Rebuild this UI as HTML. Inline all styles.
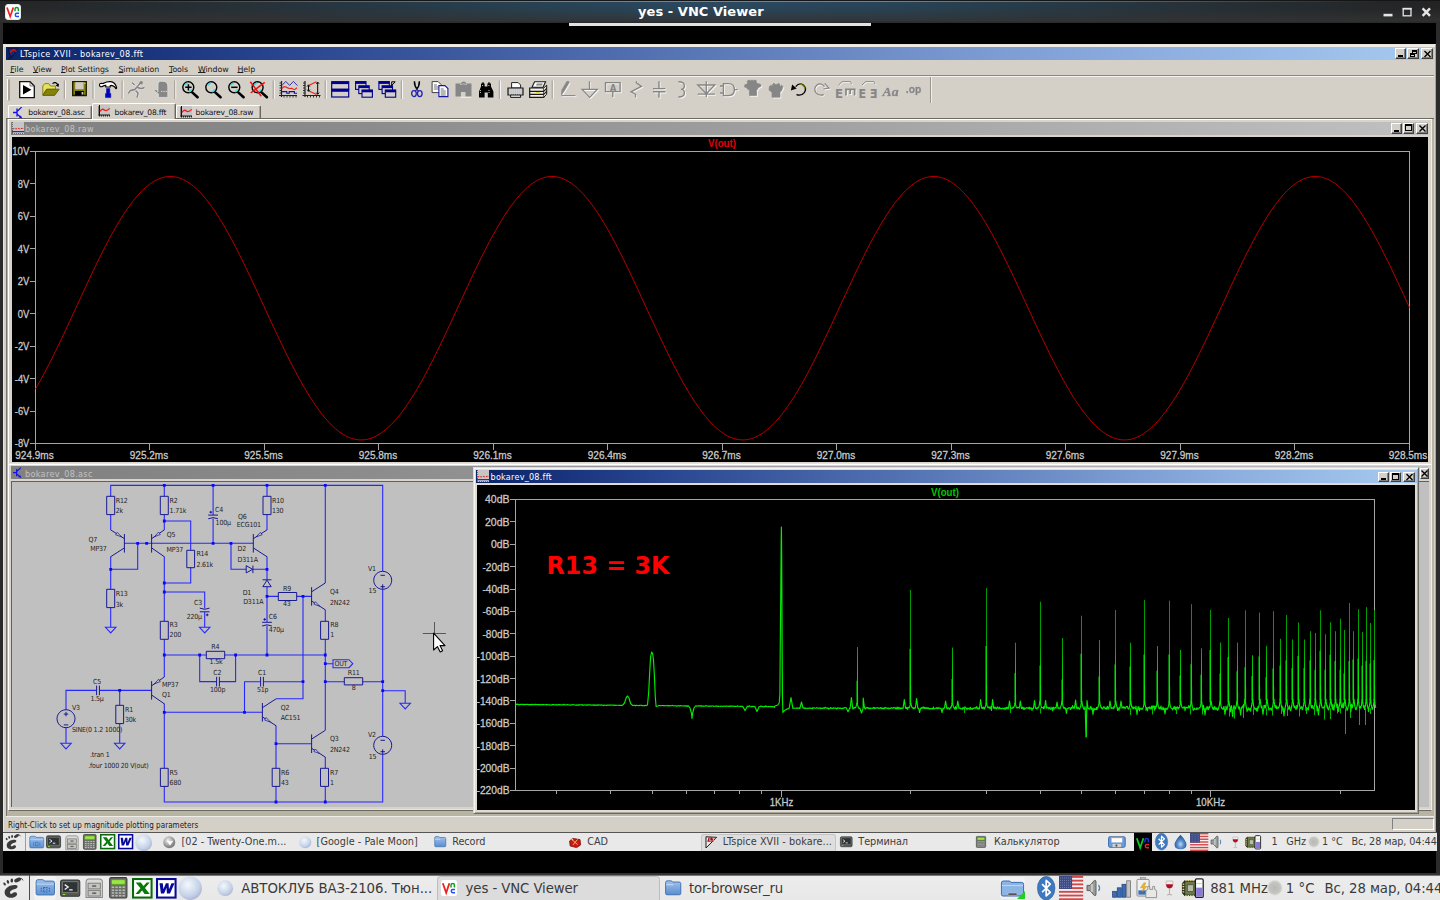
<!DOCTYPE html>
<html lang="en"><head><meta charset="utf-8"><title>yes - VNC Viewer</title>
<style>
*{box-sizing:border-box;margin:0;padding:0}
html,body{width:1440px;height:900px;overflow:hidden;background:#000}
body{position:relative;font-family:"DejaVu Sans","Liberation Sans",sans-serif;font-size:8px;color:#000}
.a{position:absolute}
.t{position:absolute;white-space:pre;line-height:1}
svg{position:absolute;overflow:visible}
.w{font-family:"DejaVu Sans",sans-serif;font-size:8px}
.ax{font-family:"Liberation Sans",sans-serif;font-size:10.5px;color:#c8c8c8;fill:#cacaca;stroke:#cacaca;stroke-width:.28px}
.sc{font-family:"DejaVu Sans Condensed","DejaVu Sans",sans-serif;font-size:7px;fill:#242424;letter-spacing:-.2px}
u{text-decoration:underline;text-underline-offset:.2px;text-decoration-thickness:.9px}
.btn{position:absolute;background:#d4d0c8;border:1px solid;border-color:#fff #404040 #404040 #fff;box-shadow:inset -1px -1px 0 #808080}

</style></head>
<body>
<!-- vnc.html -->
<div class="a" style="left:0;top:0;width:1440px;height:23px;background:linear-gradient(90deg,#242526 0%,#26323a 18%,#284559 40%,#2a4a62 50%,#284559 62%,#26323a 82%,#232323 100%)"></div>
<div class="a" style="left:0;top:0;width:1440px;height:23px;background:linear-gradient(180deg,rgba(20,20,20,.95) 0,rgba(20,20,20,.95) 1px,rgba(40,40,40,0) 1px,rgba(40,40,40,0) 2px,rgba(45,45,45,.15) 40%,rgba(50,50,50,.85) 90%,rgba(40,40,40,.95) 100%)"></div>
<div class="a" style="left:0;top:1px;width:1440px;height:1px;background:linear-gradient(90deg,rgba(150,175,195,0) 4%,rgba(150,175,195,.35) 20%,rgba(150,175,195,.6) 40%,rgba(150,175,195,.6) 60%,rgba(150,175,195,.35) 80%,rgba(150,175,195,0) 96%)"></div>
<div class="a" style="left:0;top:23px;width:3px;height:850px;background:#2a2a2a"></div>
<div class="a" style="left:1436px;top:23px;width:4px;height:850px;background:#2b2b2b"></div>
<svg style="left:5px;top:4px" width="16" height="16" viewBox="0 0 16 16"><rect x="0.5" y="0.5" width="15" height="15" rx="2.5" fill="#fff" stroke="#e8e8e8"/><path d="M2 3.5 L5.2 12.5 L8.3 3.5" fill="none" stroke="#f02020" stroke-width="1.7"/><path d="M10 7.2V5.2Q10 3.6 11.7 3.6Q13.4 3.6 13.4 5.2V7.2" fill="none" stroke="#10a020" stroke-width="1.5"/><path d="M14 9.3H11.8Q10.3 9.3 10.3 10.9Q10.3 12.6 11.8 12.6H14" fill="none" stroke="#2050f0" stroke-width="1.5"/></svg>
<div class="t" style="left:638px;top:4px;font:bold 13px 'DejaVu Sans',sans-serif;color:#fff;letter-spacing:.05px">yes - VNC Viewer</div>
<div class="a" style="left:569px;top:23px;width:302px;height:3px;background:#e2e2e2"></div>
<svg style="left:1380px;top:4px" width="56" height="16" viewBox="1380 4 56 16"><rect x="1383.5" y="13.8" width="9" height="2.6" fill="#e6e6e6"/><rect x="1403.2" y="8.8" width="7.8" height="7" fill="none" stroke="#e6e6e6" stroke-width="1.3"/><rect x="1402.6" y="7.8" width="9" height="1.6" fill="#e6e6e6"/><path d="M1422.6 8.4L1430 15.8M1430 8.4L1422.6 15.8" stroke="#e6e6e6" stroke-width="2.4" fill="none"/></svg>

<!-- ltframe.html -->
<div class="a" style="left:3px;top:44px;width:1433px;height:789px;background:#d4d0c8;border:1px solid;border-color:#e8e4dc #a8a49c #808080 #e8e4dc"></div>
<div class="a" style="left:4px;top:45px;width:1431px;height:2px;background:#eeebe4"></div>
<div class="a" style="left:6px;top:47px;width:1428px;height:13px;background:linear-gradient(90deg,#0a246a 0%,#2a4690 20%,#5b7ab8 50%,#86a6da 75%,#a6caf0 100%)"></div>
<svg style="left:7px;top:47px" width="12" height="13" viewBox="0 0 12 13"><path d="M1 1.5L11 1L4 11.5Z" fill="#1a2a7a" stroke="#0c1440" stroke-width="1"/><path d="M3 5.5L6.5 2.5L9.5 4.5" stroke="#e01010" stroke-width="1.3" fill="none"/><path d="M1 12L6 8" stroke="#101030" stroke-width="1"/></svg>
<div class="t w" style="left:20px;top:50.4px;color:#fff;letter-spacing:.37px;font-size:8.1px">LTspice XVII - bokarev_08.fft</div>
<div class="btn" style="left:1395px;top:48px;width:11px;height:11px"><i class="a" style="left:2px;top:6px;width:5px;height:2px;background:#000"></i></div>
<div class="btn" style="left:1407px;top:48px;width:12px;height:11px"><i class="a" style="left:4px;top:1px;width:5px;height:4px;border:1px solid #000;border-top-width:2px"></i><i class="a" style="left:2px;top:4px;width:5px;height:4px;border:1px solid #000;border-top-width:2px;background:#d4d0c8"></i></div>
<div class="btn" style="left:1421px;top:48px;width:12px;height:11px"><svg style="left:2px;top:2px" width="7" height="6" viewBox="0 0 7 6"><path d="M0.5 0L6.5 6M6.5 0L0.5 6" stroke="#000" stroke-width="1.4"/></svg></div>
<!-- menu -->
<div class="t w" style="left:10.3px;top:66px;font-size:7.9px;letter-spacing:.02px;color:#202020"><u>F</u>ile</div>
<div class="t w" style="left:33px;top:66px;font-size:7.9px;letter-spacing:.02px;color:#202020"><u>V</u>iew</div>
<div class="t w" style="left:61px;top:66px;font-size:7.9px;letter-spacing:-.15px;color:#202020"><u>P</u>lot Settings</div>
<div class="t w" style="left:118.5px;top:66px;font-size:7.9px;letter-spacing:-.15px;color:#202020"><u>S</u>imulation</div>
<div class="t w" style="left:169px;top:66px;font-size:7.9px;letter-spacing:-.1px;color:#202020"><u>T</u>ools</div>
<div class="t w" style="left:198px;top:66px;font-size:7.9px;letter-spacing:-.1px;color:#202020"><u>W</u>indow</div>
<div class="t w" style="left:237.5px;top:66px;font-size:7.9px;letter-spacing:-.1px;color:#202020"><u>H</u>elp</div>
<div class="a" style="left:6px;top:75px;width:1428px;height:1px;background:#8c8880"></div>
<div class="a" style="left:6px;top:76px;width:1428px;height:1px;background:#f4f2ee"></div>
<!-- MDI client -->
<div class="a" style="left:6px;top:117.5px;width:1428px;height:698.5px;background:#b8b4a4;border-top:1.5px solid #6c6a64;border-left:1.5px solid #77746c"></div>

<!-- toolbar.html -->
<svg style="left:0;top:0" width="1440" height="900" viewBox="0 0 1440 900">
<path d="M7.5 79v21" stroke="#fff" stroke-width="1"/><path d="M9 79.5v21" stroke="#8a867e" stroke-width="1.2"/>
<path d="M65.3 80.5v18.5" stroke="#fff" stroke-width="1"/><path d="M64.3 80.5v18.5" stroke="#a09c94" stroke-width="1"/>
<path d="M94.0 80.5v18.5" stroke="#fff" stroke-width="1"/><path d="M93.0 80.5v18.5" stroke="#a09c94" stroke-width="1"/>
<path d="M123.1 80.5v18.5" stroke="#fff" stroke-width="1"/><path d="M122.1 80.5v18.5" stroke="#a09c94" stroke-width="1"/>
<path d="M175.7 80.5v18.5" stroke="#fff" stroke-width="1"/><path d="M174.7 80.5v18.5" stroke="#a09c94" stroke-width="1"/>
<path d="M274.2 80.5v18.5" stroke="#fff" stroke-width="1"/><path d="M273.2 80.5v18.5" stroke="#a09c94" stroke-width="1"/>
<path d="M326.2 80.5v18.5" stroke="#fff" stroke-width="1"/><path d="M325.2 80.5v18.5" stroke="#a09c94" stroke-width="1"/>
<path d="M402.3 80.5v18.5" stroke="#fff" stroke-width="1"/><path d="M401.3 80.5v18.5" stroke="#a09c94" stroke-width="1"/>
<path d="M500.3 80.5v18.5" stroke="#fff" stroke-width="1"/><path d="M499.3 80.5v18.5" stroke="#a09c94" stroke-width="1"/>
<path d="M553.2 80.5v18.5" stroke="#fff" stroke-width="1"/><path d="M552.2 80.5v18.5" stroke="#a09c94" stroke-width="1"/>
<path d="M930.5 77v26" stroke="#9a968e" stroke-width="1"/><path d="M931.5 77v26" stroke="#f0eee8" stroke-width="1"/>
<g transform="translate(19,81)"><path d="M0.7 0.7h10.3l4.3 4.3v11.6h-14.6z" fill="#fff" stroke="#111" stroke-width="1.3"/><path d="M11 0.7v4.3h4.3" fill="none" stroke="#555" stroke-width=".8"/><path d="M4 4l8.4 4.7L4 13.6z" fill="#000"/></g>
<g transform="translate(42,81)"><path d="M10.5 2.6q3.2-2.6 5.6 1.6" fill="none" stroke="#000" stroke-width="1.2"/><path d="M17 2.4l-.4 3.6l-3-1.6z" fill="#000"/><path d="M0.8 5l2-2.4h4l1.6 2.4h5v3.4h-9l-3.6 5.4z" fill="#e6e25c" stroke="#7c7a14" stroke-width=".9"/><path d="M0.8 14.4l4-6.2h12.4l-4.6 6.2z" fill="#84820a" stroke="#5e5c06" stroke-width=".9"/></g>
<g transform="translate(72,81)"><path d="M0.7 0.7h13.6v13.8h-13.6z" fill="#84820a" stroke="#1c1c00" stroke-width="1.3"/><rect x="3.2" y="1.2" width="8.4" height="7" fill="#d0ccc4"/><rect x="3" y="10" width="9" height="4.3" fill="#000"/><rect x="9.6" y="11" width="1.8" height="2.6" fill="#d0ccc4"/><rect x="12.2" y="1.6" width="1.2" height="1.4" fill="#d0ccc4"/></g>
<g transform="translate(98.5,81)"><path d="M1 4q0-2 2.2-1.6q1.6.3 2.4-.4q2.6-1.6 6.4-1.4q4.600 .6 6 5.600q.4 1.600-.5 1.600q-1.400-3-4.600-3.400l-1.200 .2v1.400h-4.400v-1.600q-2 0-3 .800q-1 .8-2.300 .4q-1-.2-1-1.600z" fill="#fff" stroke="#000" stroke-width="1.1"/><path d="M8 7.600h3.300v5h1v4h-5.300v-4h1z" fill="#0000c8" stroke="#000090" stroke-width=".5"/></g>
<g transform="translate(128,81)"><g stroke="#fff" stroke-width="2.6" fill="none" opacity=".9"><path d="M4 1.600l2.600 2.400M12.500 1.400l-2.600 3.600l-3 3.400l-4.600 1.200l-2 3M9.600 6.600l4 1l3-1.200M7.600 9.600l2.400 2.400l-1 4.600"/></g><g stroke="#868686" stroke-width="1.7" fill="none"><path d="M4 1.600l2.600 2.400M12.500 1.400l-2.600 3.600l-3 3.400l-4.600 1.200l-2 3M9.600 6.600l4 1l3-1.200M7.600 9.600l2.400 2.400l-1 4.600"/></g><circle cx="13.200" cy="1.800" r="1.700" fill="#868686"/></g>
<g transform="translate(153,81)"><path d="M5.400 16.400v-3.600l-3.400-2.200q-1.600-1.600 0-2.400l3 1.200v-6.400q0-2.600 2.800-2.800q4.600-.4 6 1.600q1 1.400 1 4v10.600z" fill="#868686" stroke="#e8e6e0" stroke-width=".7"/><path d="M4 10.400h1.600M8 10.400h1.400M10.400 10.400h1.400M12.600 10.400h1.400" stroke="#d8d6d0" stroke-width="1"/></g>
<g transform="translate(182,81)"><path d="M9.400 10.600l6.200 5.600" stroke="#000" stroke-width="2.600" stroke-linecap="round"/><circle cx="6.300" cy="6.300" r="5.500" fill="#d4d0c8" stroke="#000" stroke-width="1.400"/><path d="M2.800 4.400q1-2 3-2.400M9.800 8.400q-1 2-3 2.400" stroke="#30e0e8" stroke-width="1.600" fill="none"/><path d="M3.200 6.300h6.400M6.400 3.200v6.400" stroke="#000" stroke-width="1.500"/></g>
<g transform="translate(205,81)"><path d="M9.400 10.600l6.200 5.600" stroke="#000" stroke-width="2.600" stroke-linecap="round"/><circle cx="6.300" cy="6.300" r="5.500" fill="#d4d0c8" stroke="#000" stroke-width="1.400"/><path d="M2.800 4.400q1-2 3-2.400M9.800 8.400q-1 2-3 2.400" stroke="#30e0e8" stroke-width="1.600" fill="none"/></g>
<g transform="translate(228,81)"><path d="M9.400 10.600l6.200 5.600" stroke="#000" stroke-width="2.600" stroke-linecap="round"/><circle cx="6.300" cy="6.300" r="5.500" fill="#d4d0c8" stroke="#000" stroke-width="1.400"/><path d="M2.800 4.400q1-2 3-2.400M9.800 8.400q-1 2-3 2.400" stroke="#30e0e8" stroke-width="1.600" fill="none"/><path d="M3.200 6.300h6.400" stroke="#000" stroke-width="1.500"/></g>
<g transform="translate(251.3,81)"><path d="M9.400 10.600l6.200 5.600" stroke="#000" stroke-width="2.600" stroke-linecap="round"/><circle cx="6.300" cy="6.300" r="5.500" fill="#d4d0c8" stroke="#000" stroke-width="1.400"/><path d="M2.800 4.400q1-2 3-2.400M9.800 8.400q-1 2-3 2.400" stroke="#30e0e8" stroke-width="1.600" fill="none"/><path d="M-1 .8l11 14.400M13.400 1.400l-14 10.600" stroke="#f01010" stroke-width="1.500"/></g>
<g transform="translate(279,81)"><path d="M2.500 0v16M0 14.500h18" stroke="#202020" stroke-width="1.200"/><path d="M0.500 2h2M.5 4.500h2M.5 7h2M.5 9.500h2M.5 12h2M5 14.500v2M8 14.500v2M11 14.500v2M14 14.500v2M17 14.500v2" stroke="#202020" stroke-width=".9"/><path d="M2.800 4.600l4-4.200l3.800 4l3.800-4l4 4.200" fill="none" stroke="#3030b0" stroke-width="1"/><path d="M2.800 7.600q2.200-3 4.600-1.400q2.600 1.800 5.200 1q2 1.800 3.400 1l2-1.400" fill="none" stroke="#f02020" stroke-width="1.100"/><path d="M2.800 10.600h5v1.600h2.400v-1.600h5.200v1.600h2.600" fill="none" stroke="#1010a0" stroke-width="1.100"/></g>
<g transform="translate(302.5,81)"><path d="M2.500 0v16M0 14.500h18" stroke="#202020" stroke-width="1.200"/><path d="M0.500 2h2M.5 4.500h2M.5 7h2M.5 9.500h2M.5 12h2M5 14.500v2M8 14.500v2M11 14.500v2M14 14.500v2M17 14.500v2" stroke="#202020" stroke-width=".9"/><path d="M14 .8l-7.400 3.400M6.600 10l7.400 3.400" fill="none" stroke="#f02020" stroke-width="1.100"/><path d="M6 4.400v5.400M15.200 1.400v11.600" stroke="#000" stroke-width="1"/><path d="M4.600 5.600l1.400-1.800l1.400 1.800M4.600 8.600l1.400 1.800l1.400-1.800M13.800 2.800l1.400-1.800l1.400 1.800M13.800 11.600l1.400 1.800l1.400-1.800" fill="none" stroke="#000" stroke-width=".9"/></g>
<g transform="translate(331,81)"><rect x=".7" y=".7" width="17" height="7.600" fill="#d4d0c8" stroke="#000090" stroke-width="1.200"/><rect x=".7" y=".7" width="17" height="2.400" fill="#000090"/><rect x=".7" y="8.400" width="17" height="7.600" fill="#d4d0c8" stroke="#000090" stroke-width="1.200"/><rect x=".7" y="8.400" width="17" height="2.400" fill="#000090"/></g>
<g transform="translate(355,81)"><rect x=".6" y=".6" width="10.400" height="7.800" fill="#d4d0c8" stroke="#000090" stroke-width="1.100"/><rect x=".6" y=".6" width="10.400" height="2.300" fill="#000090"/><rect x="3.800" y="4.800" width="10.400" height="7.800" fill="#d4d0c8" stroke="#000090" stroke-width="1.100"/><rect x="3.800" y="4.800" width="10.400" height="2.300" fill="#000090"/><rect x="7" y="9" width="10.400" height="7.200" fill="#d4d0c8" stroke="#000090" stroke-width="1.100"/><rect x="7" y="9" width="10.400" height="2.300" fill="#000090"/></g>
<g transform="translate(378.3,81)"><rect x=".6" y=".6" width="10.400" height="7.800" fill="#d4d0c8" stroke="#000090" stroke-width="1.100"/><rect x=".6" y=".6" width="10.400" height="2.300" fill="#000090"/><rect x="3.800" y="4.800" width="10.400" height="7.800" fill="#d4d0c8" stroke="#000090" stroke-width="1.100"/><rect x="3.800" y="4.800" width="10.400" height="2.300" fill="#000090"/><rect x="7" y="9" width="10.400" height="7.200" fill="#d4d0c8" stroke="#000090" stroke-width="1.100"/><rect x="7" y="9" width="10.400" height="2.300" fill="#000090"/><path d="M13.400 .8h3.600v3.600M13.600 .9l3.600 3.800" transform="translate(30.400,0) scale(-1,1)" fill="none" stroke="#000" stroke-width="1"/></g>
<g transform="translate(411,81)"><path d="M3.400 .2q0 5 3 8.400M8.400 .2q0 5-3 8.400" fill="none" stroke="#000" stroke-width="1.500"/><ellipse cx="3" cy="12.600" rx="2.300" ry="3" fill="none" stroke="#2020b0" stroke-width="1.300"/><ellipse cx="8.800" cy="12.600" rx="2.300" ry="3" fill="none" stroke="#2020b0" stroke-width="1.300"/><path d="M4.400 10.200l1.500-2l1.500 2" fill="none" stroke="#2020b0" stroke-width="1.200"/></g>
<g transform="translate(431.5,81)"><path d="M.6.6h6l3 3v8h-9z" fill="#fff" stroke="#404040" stroke-width="1"/><path d="M2.400 4h3M2.400 6h5M2.400 8h5" stroke="#606060" stroke-width=".9"/><path d="M7.400 4.600h6l3 3v8h-9z" fill="#fff" stroke="#1818a0" stroke-width="1.100"/><path d="M9.200 8h3M9.200 10h5M9.200 12h5M9.200 14h5" stroke="#606060" stroke-width=".9"/></g>
<g transform="translate(455,81)"><path d="M.5 2.600h5.500q.4-2.200 2.600-2.200t2.600 2.200h5.300v13h-6v-4.600h-4.600v4.600h-5.400z" fill="#868686"/><path d="M5.400 15.800h10.800v.9h-10.800z" fill="#fff" opacity=".8"/><path d="M5 3.600q3.400-1.400 7 0" fill="none" stroke="#c8c8c8" stroke-width=".8"/></g>
<g transform="translate(477,81)"><path d="M4 2.600h3.600v3h2.800v-3h3.600v3l2.400 5v6h-5.600v-5h-3.200v5h-5.600v-6l2-5z" fill="#000"/><path d="M5 1.400h2v1.400h-2zM11 1.400h2v1.400h-2z" fill="#000"/><path d="M3.400 9v4M5.600 4v2M12 9v4M11.800 4v2" stroke="#fff" stroke-width=".8" stroke-dasharray="1 1"/></g>
<g transform="translate(507,82)"><path d="M4.600 .6h6.600l2.400 2.400v3h-9z" fill="#fff" stroke="#202020" stroke-width="1"/><path d="M1 6h15v7h-15z" fill="#c4c4c4" stroke="#181818" stroke-width="1.200"/><path d="M3.600 13h10v2.400h-10z" fill="#e8e8e8" stroke="#181818" stroke-width="1"/><path d="M2.400 8h12M2.400 10h12M2.400 12h12" stroke="#e6e6e6" stroke-width=".8" stroke-dasharray="1.200 1"/></g>
<g transform="translate(529,81)"><path d="M5.600 .7h11l-2.600 5.600h-11z" fill="#fff" stroke="#181818" stroke-width="1.100"/><path d="M7.800 2.600h6l-.8 2h-6z" fill="#888"/><path d="M.7 7h14v9.400h-14z" fill="#f4f0e4" stroke="#181818" stroke-width="1.200"/><path d="M14.700 7l3-2.800v9l-3 3.200" fill="#e8e4d8" stroke="#181818" stroke-width="1"/><path d="M.7 10.400h14M.7 13.400h14M14.700 10.400l3-3M14.700 13.400l3-3" stroke="#181818" stroke-width="1.100" fill="none"/><rect x="7" y="11.200" width="4" height="1.400" fill="#e0d820"/></g>
<g transform="translate(560,81)"><path d="M1.400 14l.4-5l5-8.400q1.600-.8 2.600.6l-5 8.600z" fill="#fff" stroke="#fff" stroke-width="0.6" transform="translate(.9,.9)" opacity=".85"/><path d="M1.400 14l.4-5l5-8.400q1.600-.8 2.600.6l-5 8.600z" fill="#868686" stroke="#868686" stroke-width="0.6"/></g>
<g transform="translate(560,81)"><path d="M1.400 14.600h14" fill="none" stroke="#fff" stroke-width="1.1" transform="translate(.9,.9)" opacity=".85"/><path d="M1.400 14.600h14" fill="none" stroke="#868686" stroke-width="1.1"/></g>
<g transform="translate(581.5,81)"><path d="M8 .2v8M.6 8.400h15.200l-7.600 8z" fill="none" stroke="#fff" stroke-width="1.3" transform="translate(.9,.9)" opacity=".85"/><path d="M8 .2v8M.6 8.400h15.200l-7.600 8z" fill="none" stroke="#868686" stroke-width="1.3"/></g>
<g transform="translate(604,81)"><path d="M1.500 1.600h14.600v9h-14.600zM8.800 10.600v5.600" fill="none" stroke="#fff" stroke-width="1.4" transform="translate(.9,.9)" opacity=".85"/><path d="M1.500 1.600h14.600v9h-14.600zM8.800 10.600v5.600" fill="none" stroke="#868686" stroke-width="1.4"/></g>
<text x="610" y="91" style="font:bold 8px 'DejaVu Sans',sans-serif;fill:#868686">A</text>
<g transform="translate(629,81)"><path d="M7.400 .2v1.600l5 3.600l-10.400 5.400l4.600 2.600v3" fill="none" stroke="#fff" stroke-width="1.3" transform="translate(.9,.9)" opacity=".85"/><path d="M7.400 .2v1.600l5 3.600l-10.400 5.400l4.600 2.600v3" fill="none" stroke="#868686" stroke-width="1.3"/></g>
<g transform="translate(653,81)"><path d="M6 .2v7M6 11.200v5.600M0 7.600h12.400M0 10.800h12.400" fill="none" stroke="#fff" stroke-width="1.4" transform="translate(.9,.9)" opacity=".85"/><path d="M6 .2v7M6 11.200v5.600M0 7.600h12.400M0 10.800h12.400" fill="none" stroke="#868686" stroke-width="1.4"/></g>
<g transform="translate(677,81)"><path d="M1.400 .8q6 0 6 4q0 3.400-3.400 3.600q3.400 .2 3.400 3.600q0 4-6 4" fill="none" stroke="#fff" stroke-width="1.4" transform="translate(.9,.9)" opacity=".85"/><path d="M1.400 .8q6 0 6 4q0 3.400-3.400 3.600q3.400 .2 3.400 3.600q0 4-6 4" fill="none" stroke="#868686" stroke-width="1.4"/></g>
<g transform="translate(697.5,81)"><path d="M8.800 .2v16M.2 4h17.200l-8.600 8.800zM.2 13.200h17.200" fill="none" stroke="#fff" stroke-width="1.3" transform="translate(.9,.9)" opacity=".85"/><path d="M8.800 .2v16M.2 4h17.200l-8.600 8.800zM.2 13.200h17.200" fill="none" stroke="#868686" stroke-width="1.3"/></g>
<g transform="translate(720,81)"><path d="M0 5h3.400M0 12h3.400M3.400 2.600h5q6 0 6 6t-6 6h-5zM14.400 8.600h3.400" fill="none" stroke="#fff" stroke-width="1.4" transform="translate(.9,.9)" opacity=".85"/><path d="M0 5h3.400M0 12h3.400M3.400 2.600h5q6 0 6 6t-6 6h-5zM14.400 8.600h3.400" fill="none" stroke="#868686" stroke-width="1.4"/></g>
<g transform="translate(743.5,81)"><path d="M4 1.600a1.700 1.700 0 1 1 3 0a1.700 1.700 0 1 1 3 0a1.700 1.700 0 1 1 3 0l2.400 1.400a1.600 1.600 0 1 1 0 3q-1.400 2-2.400 3.600v5h-7v-5q-2-1-3.400-3a1.600 1.600 0 1 1 .8-3z" fill="#fff" stroke="#fff" stroke-width="0.7" transform="translate(.9,.9)" opacity=".85"/><path d="M4 1.600a1.700 1.700 0 1 1 3 0a1.700 1.700 0 1 1 3 0a1.700 1.700 0 1 1 3 0l2.400 1.400a1.600 1.600 0 1 1 0 3q-1.400 2-2.400 3.600v5h-7v-5q-2-1-3.400-3a1.600 1.600 0 1 1 .8-3z" fill="#868686" stroke="#868686" stroke-width="0.7"/></g>
<g transform="translate(767,83)"><path d="M2.400 3.600l1.400-1.400l1.600 1.400v-2l1.600-1.400l1.400 1.400h1.600l1.400-1.400l1.600 1.400v2l1.600-1.400l1.400 1.400l-1.400 4l-1.600 2v4.600h-8v-4.600l-3-2.600z" fill="#fff" stroke="#fff" stroke-width="0.7" transform="translate(.9,.9)" opacity=".85"/><path d="M2.400 3.600l1.400-1.400l1.600 1.400v-2l1.600-1.400l1.400 1.400h1.600l1.400-1.400l1.600 1.400v2l1.600-1.400l1.400 1.400l-1.400 4l-1.600 2v4.600h-8v-4.600l-3-2.600z" fill="#868686" stroke="#868686" stroke-width="0.7"/></g>
<g transform="translate(790.5,82)"><path d="M5.200 4.600q3.600-4.400 7.600-1.600q3.800 3.400 1 7.600q-2.800 3.600-7.800 2" fill="none" stroke="#000" stroke-width="1.300"/><path d="M9 1.800q4.600 1 5.400 5.200" fill="none" stroke="#8a8a00" stroke-width="1.100"/><path d="M.4 8.600l1.200-6l4.600 4z" fill="#000"/></g>
<g transform="translate(813.5,82)"><path d="M11 4.600q-3.600-4.400-7.600-1.600q-3.800 3.400-1 7.600q2.800 3.600 7.800 2M11.200 1.400l4.400 4.600l-5.600 1" fill="none" stroke="#fff" stroke-width="1.2" transform="translate(.9,.9)" opacity=".85"/><path d="M11 4.600q-3.600-4.400-7.600-1.600q-3.800 3.400-1 7.600q2.800 3.600 7.800 2M11.200 1.400l4.400 4.600l-5.600 1" fill="none" stroke="#868686" stroke-width="1.2"/></g>
<g transform="translate(835.5,81)"><path d="M3 4l3.600-3.400h8.400l1 2.600" fill="none" stroke="#fff" stroke-width="0.9" transform="translate(.9,.9)" opacity=".85"/><path d="M3 4l3.600-3.400h8.400l1 2.600" fill="none" stroke="#868686" stroke-width="0.9"/></g>
<text x="835" y="98" textLength="8" lengthAdjust="spacingAndGlyphs" style="font:bold 12.500px 'DejaVu Sans',sans-serif;fill:#868686">E</text>
<g transform="translate(845,81)"><path d="M0 8.400h10.600M1 8.400v6M5.200 8.400v4.600M9.600 8.400v6" fill="none" stroke="#fff" stroke-width="1.7" transform="translate(.9,.9)" opacity=".85"/><path d="M0 8.400h10.600M1 8.400v6M5.200 8.400v4.600M9.600 8.400v6" fill="none" stroke="#868686" stroke-width="1.7"/></g>
<g transform="translate(859,81)"><path d="M3 4l3.600-3.400h8.400l1 2.600" fill="none" stroke="#fff" stroke-width="0.9" transform="translate(.9,.9)" opacity=".85"/><path d="M3 4l3.600-3.400h8.400l1 2.600" fill="none" stroke="#868686" stroke-width="0.9"/></g>
<text x="858.600" y="98" textLength="7.600" lengthAdjust="spacingAndGlyphs" style="font:bold 12.500px 'DejaVu Sans',sans-serif;fill:#868686">E</text>
<text x="869.600" y="98" textLength="7.600" lengthAdjust="spacingAndGlyphs" transform="translate(1747,0) scale(-1,1)" style="font:bold 12.500px 'DejaVu Sans',sans-serif;fill:#868686">E</text>
<text x="882.500" y="95.500" textLength="16" lengthAdjust="spacingAndGlyphs" style="font:italic bold 13px 'Liberation Serif',serif;fill:#868686;stroke:#868686;stroke-width:.45px;filter:drop-shadow(.9px .9px 0 #fff)">Aa</text>
<text x="905.800" y="93" textLength="15.500" lengthAdjust="spacingAndGlyphs" style="font:bold 11px 'Liberation Sans',sans-serif;fill:#868686;stroke:#868686;stroke-width:.45px;filter:drop-shadow(.9px .9px 0 #fff)">.op</text>
</svg>
<!-- tabs.html -->
<div class="a" style="left:8px;top:105px;width:84px;height:12.5px;background:#d8d4cc;border:1px solid;border-color:#fff #6a665e transparent #fff;border-bottom:0;border-radius:2px 2px 0 0;box-shadow:inset -1px 0 0 #a8a49c"></div>
<svg style="left:13px;top:106.5px" width="11" height="12" viewBox="0 0 11 12"><path d="M4 1.500v8M0 5.500h4M4 4.500l4.600-4.400M4 7l4 3.400" stroke="#1010f0" stroke-width="1.300" fill="none"/><path d="M9.400 11.600l-3.600-1.200l2-2z" fill="#1010f0"/></svg>
<div class="t w" style="left:28.3px;top:109.2px;font-size:7.6px;letter-spacing:-.19px;color:#101018">bokarev_08.asc</div>
<div class="a" style="left:176px;top:105px;width:85px;height:12.5px;background:#d8d4cc;border:1px solid;border-color:#fff #6a665e transparent #fff;border-bottom:0;border-radius:2px 2px 0 0;box-shadow:inset -1px 0 0 #a8a49c"></div>
<svg style="left:180px;top:106.3px" width="12" height="12" viewBox="0 0 12 12"><rect x="1.500" y="0" width="10.500" height="9.500" fill="#c4c4c4"/><path d="M1.500 0v11.500M0 10h12" stroke="#101010" stroke-width="1"/><path d="M0 2h1.500M0 4h1.500M0 6h1.500M0 8h1.500M3.500 10v1.600M5.500 10v1.600M7.500 10v1.600M9.500 10v1.600M11.500 10v1.600" stroke="#101010" stroke-width=".8"/><path d="M2 6.400q2.200-3.400 4.400-1.400q2 1.600 5.400-1.600" fill="none" stroke="#f01818" stroke-width="1.300"/></svg>
<div class="t w" style="left:195.6px;top:109.2px;font-size:7.6px;letter-spacing:-.19px;color:#101018">bokarev_08.raw</div>
<div class="a" style="left:92px;top:103px;width:84px;height:16.200000000000003px;background:#d4d0c8;border:1px solid;border-color:#fff #6a665e transparent #fff;border-bottom:0;border-radius:2px 2px 0 0;box-shadow:inset -1px 0 0 #a8a49c"></div>
<svg style="left:97.5px;top:105.3px" width="12" height="12" viewBox="0 0 12 12"><rect x="1.500" y="0" width="10.500" height="9.500" fill="#c4c4c4"/><path d="M1.500 0v11.500M0 10h12" stroke="#101010" stroke-width="1"/><path d="M0 2h1.500M0 4h1.500M0 6h1.500M0 8h1.500M3.500 10v1.600M5.500 10v1.600M7.500 10v1.600M9.500 10v1.600M11.500 10v1.600" stroke="#101010" stroke-width=".8"/><path d="M2 6.400q2.200-3.400 4.400-1.400q2 1.600 5.400-1.600" fill="none" stroke="#f01818" stroke-width="1.300"/></svg>
<div class="t w" style="left:114.5px;top:108.6px;font-size:7.6px;letter-spacing:-.19px;color:#101018">bokarev_08.fft</div>
<!-- raw.html -->
<div class="a" style="left:8px;top:119px;width:1424px;height:345px;background:#d8d4cc;border:1px solid;border-color:#fff #f0eee8 #e8e4dc #fff"></div>
<div class="a" style="left:11px;top:122px;width:1417px;height:13px;background:linear-gradient(90deg,#808080 0%,#8c8c8c 25%,#a0a0a0 55%,#b6b6b6 85%,#c0c0c0 100%)"></div>
<svg style="left:12px;top:122px" width="12" height="13" viewBox="0 0 12 13"><rect x="0" y="0" width="12" height="12" fill="#c6c6c6"/><path d="M0.5 7.2L2.5 6.3L4 7L6 6.2L8 7L10 6.3L12 6.6" stroke="#e82020" stroke-width="1" stroke-dasharray="2 1" fill="none"/><path d="M0 9.6H12" stroke="#2030c0" stroke-width="1.2"/><path d="M0.5 0V12M0 11.5H12" stroke="#505050" stroke-width=".8" stroke-dasharray="1 1"/></svg>
<div class="t w" style="left:25px;top:124.8px;color:#c2c2c2;letter-spacing:.33px;font-size:8.1px">bokarev_08.raw</div>
<div class="btn" style="left:1391px;top:123px;width:11px;height:11px"><i class="a" style="left:2px;top:6px;width:5px;height:2px;background:#000"></i></div>
<div class="btn" style="left:1403px;top:123px;width:11px;height:11px"><i class="a" style="left:1px;top:0px;width:7px;height:7px;border:1px solid #000;border-top-width:2px"></i></div>
<div class="btn" style="left:1416px;top:123px;width:12px;height:11px"><svg style="left:2px;top:1px" width="7" height="7" viewBox="0 0 7 7"><path d="M0.5 0.5L6.5 6.5M6.5 0.5L0.5 6.5" stroke="#000" stroke-width="1.4"/></svg></div>
<div class="a" style="left:12px;top:137px;width:1416px;height:325px;background:#000"></div>
<svg style="left:0;top:0" width="1440" height="900" viewBox="0 0 1440 900">
<g fill="none" stroke="#a6a6a6" stroke-width="1" shape-rendering="crispEdges">
<path d="M30 151.5H1409.5V449.5M35.5 151.5V449.5M30 443.5H1409.5"/>
<path d="M30 183.5H35.5M30 216.5H35.5M30 248.5H35.5M30 281.5H35.5M30 313.5H35.5M30 346.5H35.5M30 378.5H35.5M30 411.5H35.5M149.5 443.5V449.5M264.5 443.5V449.5M378.5 443.5V449.5M493.5 443.5V449.5M607.5 443.5V449.5M722.5 443.5V449.5M836.5 443.5V449.5M951.5 443.5V449.5M1065.5 443.5V449.5M1180.5 443.5V449.5M1294.5 443.5V449.5"/>
</g>
<text class="ax" x="29.3" y="155.4" text-anchor="end" textLength="17" lengthAdjust="spacingAndGlyphs">10V</text>
<text class="ax" x="29.3" y="187.8" text-anchor="end" textLength="11.5" lengthAdjust="spacingAndGlyphs">8V</text>
<text class="ax" x="29.3" y="220.3" text-anchor="end" textLength="11.5" lengthAdjust="spacingAndGlyphs">6V</text>
<text class="ax" x="29.3" y="252.7" text-anchor="end" textLength="11.5" lengthAdjust="spacingAndGlyphs">4V</text>
<text class="ax" x="29.3" y="285.2" text-anchor="end" textLength="11.5" lengthAdjust="spacingAndGlyphs">2V</text>
<text class="ax" x="29.3" y="317.6" text-anchor="end" textLength="11.5" lengthAdjust="spacingAndGlyphs">0V</text>
<text class="ax" x="29.3" y="350.1" text-anchor="end" textLength="14.5" lengthAdjust="spacingAndGlyphs">-2V</text>
<text class="ax" x="29.3" y="382.5" text-anchor="end" textLength="14.5" lengthAdjust="spacingAndGlyphs">-4V</text>
<text class="ax" x="29.3" y="415" text-anchor="end" textLength="14.5" lengthAdjust="spacingAndGlyphs">-6V</text>
<text class="ax" x="29.3" y="447.4" text-anchor="end" textLength="14.5" lengthAdjust="spacingAndGlyphs">-8V</text>
<text class="ax" x="34.5" y="459.2" text-anchor="middle" textLength="38.5" lengthAdjust="spacingAndGlyphs">924.9ms</text>
<text class="ax" x="149" y="459.2" text-anchor="middle" textLength="38.5" lengthAdjust="spacingAndGlyphs">925.2ms</text>
<text class="ax" x="263.5" y="459.2" text-anchor="middle" textLength="38.5" lengthAdjust="spacingAndGlyphs">925.5ms</text>
<text class="ax" x="378" y="459.2" text-anchor="middle" textLength="38.5" lengthAdjust="spacingAndGlyphs">925.8ms</text>
<text class="ax" x="492.5" y="459.2" text-anchor="middle" textLength="38.5" lengthAdjust="spacingAndGlyphs">926.1ms</text>
<text class="ax" x="607" y="459.2" text-anchor="middle" textLength="38.5" lengthAdjust="spacingAndGlyphs">926.4ms</text>
<text class="ax" x="721.5" y="459.2" text-anchor="middle" textLength="38.5" lengthAdjust="spacingAndGlyphs">926.7ms</text>
<text class="ax" x="836" y="459.2" text-anchor="middle" textLength="38.5" lengthAdjust="spacingAndGlyphs">927.0ms</text>
<text class="ax" x="950.5" y="459.2" text-anchor="middle" textLength="38.5" lengthAdjust="spacingAndGlyphs">927.3ms</text>
<text class="ax" x="1065" y="459.2" text-anchor="middle" textLength="38.5" lengthAdjust="spacingAndGlyphs">927.6ms</text>
<text class="ax" x="1179.5" y="459.2" text-anchor="middle" textLength="38.5" lengthAdjust="spacingAndGlyphs">927.9ms</text>
<text class="ax" x="1294" y="459.2" text-anchor="middle" textLength="38.5" lengthAdjust="spacingAndGlyphs">928.2ms</text>
<text class="ax" x="1408" y="459.2" text-anchor="middle" textLength="38.5" lengthAdjust="spacingAndGlyphs">928.5ms</text>
<text x="722" y="147.2" text-anchor="middle" textLength="28" lengthAdjust="spacingAndGlyphs" style="font:bold 10px 'Liberation Sans',sans-serif;fill:#e4000c">V(out)</text>
<polyline fill="none" stroke="#c20000" stroke-width=".95" points="35.5,389 37.5,385.5 39.5,382 41.5,378.4 43.5,374.7 45.5,371 47.5,367.1 49.5,363.3 51.5,359.3 53.5,355.3 55.5,351.3 57.5,347.2 59.5,343 61.5,338.8 63.5,334.6 65.5,330.3 67.5,326.1 69.5,321.8 71.5,317.5 73.5,313.1 75.5,308.8 77.5,304.5 79.5,300.1 81.5,295.8 83.5,291.5 85.5,287.2 87.5,282.9 89.5,278.6 91.5,274.4 93.5,270.2 95.5,266.1 97.5,262 99.5,257.9 101.5,253.9 103.5,249.9 105.5,246.1 107.5,242.2 109.5,238.5 111.5,234.8 113.5,231.2 115.5,227.7 117.5,224.3 119.5,221 121.5,217.7 123.5,214.6 125.5,211.6 127.5,208.6 129.5,205.8 131.5,203.1 133.5,200.5 135.5,198.1 137.5,195.7 139.5,193.5 141.5,191.4 143.5,189.4 145.5,187.6 147.5,185.9 149.5,184.3 151.5,182.9 153.5,181.6 155.5,180.5 157.5,179.5 159.5,178.6 161.5,177.9 163.5,177.3 165.5,176.9 167.5,176.6 169.5,176.5 171.5,176.5 173.5,176.7 175.5,177 177.5,177.4 179.5,178 181.5,178.8 183.5,179.7 185.5,180.7 187.5,181.9 189.5,183.2 191.5,184.6 193.5,186.2 195.5,188 197.5,189.8 199.5,191.8 201.5,193.9 203.5,196.2 205.5,198.5 207.5,201 209.5,203.7 211.5,206.4 213.5,209.2 215.5,212.2 217.5,215.2 219.5,218.4 221.5,221.6 223.5,225 225.5,228.4 227.5,231.9 229.5,235.6 231.5,239.2 233.5,243 235.5,246.8 237.5,250.7 239.5,254.7 241.5,258.7 243.5,262.8 245.5,266.9 247.5,271 249.5,275.2 251.5,279.5 253.5,283.7 255.5,288 257.5,292.3 259.5,296.7 261.5,301 263.5,305.3 265.5,309.7 267.5,314 269.5,318.3 271.5,322.6 273.5,326.9 275.5,331.2 277.5,335.4 279.5,339.7 281.5,343.8 283.5,348 285.5,352.1 287.5,356.1 289.5,360.1 291.5,364 293.5,367.9 295.5,371.7 297.5,375.5 299.5,379.1 301.5,382.7 303.5,386.2 305.5,389.6 307.5,393 309.5,396.2 311.5,399.4 313.5,402.4 315.5,405.4 317.5,408.2 319.5,410.9 321.5,413.6 323.5,416.1 325.5,418.5 327.5,420.8 329.5,422.9 331.5,425 333.5,426.9 335.5,428.7 337.5,430.3 339.5,431.9 341.5,433.3 343.5,434.6 345.5,435.7 347.5,436.7 349.5,437.6 351.5,438.3 353.5,438.9 355.5,439.4 357.5,439.7 359.5,439.9 361.5,439.9 363.5,439.8 365.5,439.6 367.5,439.2 369.5,438.7 371.5,438.1 373.5,437.3 375.5,436.3 377.5,435.3 379.5,434.1 381.5,432.8 383.5,431.3 385.5,429.7 387.5,428 389.5,426.2 391.5,424.2 393.5,422.2 395.5,419.9 397.5,417.6 399.5,415.2 401.5,412.6 403.5,410 405.5,407.2 407.5,404.3 409.5,401.3 411.5,398.2 413.5,395 415.5,391.8 417.5,388.4 419.5,384.9 421.5,381.4 423.5,377.8 425.5,374.1 427.5,370.3 429.5,366.5 431.5,362.6 433.5,358.7 435.5,354.6 437.5,350.6 439.5,346.5 441.5,342.3 443.5,338.1 445.5,333.9 447.5,329.6 449.5,325.4 451.5,321.1 453.5,316.7 455.5,312.4 457.5,308.1 459.5,303.7 461.5,299.4 463.5,295.1 465.5,290.8 467.5,286.5 469.5,282.2 471.5,277.9 473.5,273.7 475.5,269.5 477.5,265.4 479.5,261.3 481.5,257.2 483.5,253.2 485.5,249.3 487.5,245.4 489.5,241.6 491.5,237.9 493.5,234.2 495.5,230.6 497.5,227.2 499.5,223.7 501.5,220.4 503.5,217.2 505.5,214.1 507.5,211.1 509.5,208.2 511.5,205.4 513.5,202.7 515.5,200.1 517.5,197.7 519.5,195.3 521.5,193.1 523.5,191.1 525.5,189.1 527.5,187.3 529.5,185.6 531.5,184.1 533.5,182.7 535.5,181.4 537.5,180.3 539.5,179.3 541.5,178.5 543.5,177.8 545.5,177.2 547.5,176.8 549.5,176.6 551.5,176.5 553.5,176.5 555.5,176.7 557.5,177 559.5,177.5 561.5,178.1 563.5,178.9 565.5,179.8 567.5,180.9 569.5,182.1 571.5,183.4 573.5,184.9 575.5,186.5 577.5,188.2 579.5,190.1 581.5,192.1 583.5,194.3 585.5,196.6 587.5,199 589.5,201.5 591.5,204.1 593.5,206.8 595.5,209.7 597.5,212.7 599.5,215.7 601.5,218.9 603.5,222.2 605.5,225.5 607.5,229 609.5,232.5 611.5,236.2 613.5,239.9 615.5,243.6 617.5,247.5 619.5,251.4 621.5,255.3 623.5,259.4 625.5,263.4 627.5,267.6 629.5,271.7 631.5,275.9 633.5,280.2 635.5,284.4 637.5,288.7 639.5,293 641.5,297.4 643.5,301.7 645.5,306 647.5,310.4 649.5,314.7 651.5,319 653.5,323.3 655.5,327.6 657.5,331.9 659.5,336.1 661.5,340.4 663.5,344.5 665.5,348.7 667.5,352.7 669.5,356.8 671.5,360.8 673.5,364.7 675.5,368.6 677.5,372.3 679.5,376.1 681.5,379.7 683.5,383.3 685.5,386.8 687.5,390.2 689.5,393.5 691.5,396.7 693.5,399.9 695.5,402.9 697.5,405.8 699.5,408.7 701.5,411.4 703.5,414 705.5,416.5 707.5,418.9 709.5,421.1 711.5,423.3 713.5,425.3 715.5,427.2 717.5,429 719.5,430.6 721.5,432.1 723.5,433.5 725.5,434.8 727.5,435.9 729.5,436.9 731.5,437.7 733.5,438.4 735.5,439 737.5,439.4 739.5,439.7 741.5,439.9 743.5,439.9 745.5,439.8 747.5,439.5 749.5,439.1 751.5,438.6 753.5,437.9 755.5,437.1 757.5,436.2 759.5,435.1 761.5,433.9 763.5,432.6 765.5,431.1 767.5,429.5 769.5,427.7 771.5,425.9 773.5,423.9 775.5,421.8 777.5,419.6 779.5,417.2 781.5,414.8 783.5,412.2 785.5,409.5 787.5,406.7 789.5,403.8 791.5,400.8 793.5,397.7 795.5,394.5 797.5,391.2 799.5,387.8 801.5,384.4 803.5,380.8 805.5,377.2 807.5,373.5 809.5,369.7 811.5,365.9 813.5,362 815.5,358 817.5,354 819.5,349.9 821.5,345.8 823.5,341.6 825.5,337.4 827.5,333.2 829.5,328.9 831.5,324.7 833.5,320.3 835.5,316 837.5,311.7 839.5,307.4 841.5,303 843.5,298.7 845.5,294.4 847.5,290 849.5,285.8 851.5,281.5 853.5,277.2 855.5,273 857.5,268.8 859.5,264.7 861.5,260.6 863.5,256.6 865.5,252.6 867.5,248.7 869.5,244.8 871.5,241 873.5,237.3 875.5,233.6 877.5,230.1 879.5,226.6 881.5,223.2 883.5,219.9 885.5,216.7 887.5,213.6 889.5,210.6 891.5,207.7 893.5,204.9 895.5,202.3 897.5,199.7 899.5,197.3 901.5,195 903.5,192.8 905.5,190.7 907.5,188.8 909.5,187 911.5,185.4 913.5,183.8 915.5,182.5 917.5,181.2 919.5,180.1 921.5,179.2 923.5,178.3 925.5,177.7 927.5,177.2 929.5,176.8 931.5,176.5 933.5,176.5 935.5,176.5 937.5,176.7 939.5,177.1 941.5,177.6 943.5,178.2 945.5,179 947.5,180 949.5,181.1 951.5,182.3 953.5,183.6 955.5,185.1 957.5,186.8 959.5,188.6 961.5,190.5 963.5,192.5 965.5,194.7 967.5,196.9 969.5,199.4 971.5,201.9 973.5,204.5 975.5,207.3 977.5,210.2 979.5,213.2 981.5,216.3 983.5,219.4 985.5,222.7 987.5,226.1 989.5,229.6 991.5,233.1 993.5,236.8 995.5,240.5 997.5,244.3 999.5,248.1 1001.5,252 1003.5,256 1005.5,260 1007.5,264.1 1009.5,268.3 1011.5,272.4 1013.5,276.6 1015.5,280.9 1017.5,285.2 1019.5,289.4 1021.5,293.8 1023.5,298.1 1025.5,302.4 1027.5,306.8 1029.5,311.1 1031.5,315.4 1033.5,319.7 1035.5,324.1 1037.5,328.3 1039.5,332.6 1041.5,336.8 1043.5,341 1045.5,345.2 1047.5,349.3 1049.5,353.4 1051.5,357.4 1053.5,361.4 1055.5,365.3 1057.5,369.2 1059.5,373 1061.5,376.7 1063.5,380.3 1065.5,383.9 1067.5,387.4 1069.5,390.7 1071.5,394.1 1073.5,397.3 1075.5,400.4 1077.5,403.4 1079.5,406.3 1081.5,409.1 1083.5,411.8 1085.5,414.4 1087.5,416.9 1089.5,419.2 1091.5,421.5 1093.5,423.6 1095.5,425.6 1097.5,427.5 1099.5,429.2 1101.5,430.9 1103.5,432.4 1105.5,433.7 1107.5,434.9 1109.5,436 1111.5,437 1113.5,437.8 1115.5,438.5 1117.5,439.1 1119.5,439.5 1121.5,439.8 1123.5,439.9 1125.5,439.9 1127.5,439.7 1129.5,439.5 1131.5,439.1 1133.5,438.5 1135.5,437.8 1137.5,437 1139.5,436 1141.5,434.9 1143.5,433.7 1145.5,432.3 1147.5,430.8 1149.5,429.2 1151.5,427.4 1153.5,425.6 1155.5,423.6 1157.5,421.4 1159.5,419.2 1161.5,416.8 1163.5,414.3 1165.5,411.8 1167.5,409 1169.5,406.2 1171.5,403.3 1173.5,400.3 1175.5,397.2 1177.5,394 1179.5,390.7 1181.5,387.3 1183.5,383.8 1185.5,380.2 1187.5,376.6 1189.5,372.9 1191.5,369.1 1193.5,365.2 1195.5,361.3 1197.5,357.3 1199.5,353.3 1201.5,349.2 1203.5,345.1 1205.5,340.9 1207.5,336.7 1209.5,332.5 1211.5,328.2 1213.5,323.9 1215.5,319.6 1217.5,315.3 1219.5,311 1221.5,306.6 1223.5,302.3 1225.5,298 1227.5,293.6 1229.5,289.3 1231.5,285 1233.5,280.8 1235.5,276.5 1237.5,272.3 1239.5,268.2 1241.5,264 1243.5,259.9 1245.5,255.9 1247.5,251.9 1249.5,248 1251.5,244.2 1253.5,240.4 1255.5,236.7 1257.5,233 1259.5,229.5 1261.5,226 1263.5,222.6 1265.5,219.4 1267.5,216.2 1269.5,213.1 1271.5,210.1 1273.5,207.2 1275.5,204.5 1277.5,201.8 1279.5,199.3 1281.5,196.9 1283.5,194.6 1285.5,192.4 1287.5,190.4 1289.5,188.5 1291.5,186.7 1293.5,185.1 1295.5,183.6 1297.5,182.2 1299.5,181 1301.5,180 1303.5,179 1305.5,178.2 1307.5,177.6 1309.5,177.1 1311.5,176.7 1313.5,176.5 1315.5,176.5 1317.5,176.6 1319.5,176.8 1321.5,177.2 1323.5,177.7 1325.5,178.4 1327.5,179.2 1329.5,180.1 1331.5,181.2 1333.5,182.5 1335.5,183.9 1337.5,185.4 1339.5,187.1 1341.5,188.9 1343.5,190.8 1345.5,192.8 1347.5,195 1349.5,197.3 1351.5,199.8 1353.5,202.3 1355.5,205 1357.5,207.8 1359.5,210.7 1361.5,213.7 1363.5,216.8 1365.5,220 1367.5,223.3 1369.5,226.7 1371.5,230.2 1373.5,233.7 1375.5,237.4 1377.5,241.1 1379.5,244.9 1381.5,248.8 1383.5,252.7 1385.5,256.7 1387.5,260.7 1389.5,264.8 1391.5,268.9 1393.5,273.1 1395.5,277.3 1397.5,281.6 1399.5,285.9 1401.5,290.2 1403.5,294.5 1405.5,298.8 1407.5,303.1 1409.5,307.5"/>
</svg>
<!-- asc.html -->
<div class="a" style="left:8px;top:464px;width:1424px;height:347px;background:#d8d4cc;border:1px solid;border-color:#fff #f0eee8 #6a6a60 #fff;box-shadow:inset 0 -1px 0 #e8e4dc"></div>
<div class="a" style="left:11px;top:466px;width:1417px;height:13px;background:linear-gradient(90deg,#808080 0%,#8c8c8c 25%,#a0a0a0 55%,#b6b6b6 85%,#c0c0c0 100%)"></div>
<div class="t w" style="left:25px;top:469.6px;color:#c2c2c2;letter-spacing:.33px;font-size:8.1px">bokarev_08.asc</div>
<div class="a" style="left:11px;top:481px;width:1418px;height:326px;background:#c0c0c0;border-top:1px solid #606060;border-left:1px solid #606060"></div>
<div class="btn" style="left:1420px;top:468px;width:9px;height:11px"><svg style="left:0px;top:1px" width="7" height="7" viewBox="0 0 7 7"><path d="M0.5 0.5L6.5 6.5M6.5 0.5L0.5 6.5" stroke="#000" stroke-width="1.4"/></svg></div>
<svg class="asc-icon" style="left:13px;top:467px" width="10" height="12" viewBox="0 0 11 12"><path d="M4 1.500v8M0 5.500h4M4 4.500l4.600-4.400M4 7l4 3.400" stroke="#1010f0" stroke-width="1.300" fill="none"/><path d="M9.400 11.600l-3.600-1.200l2-2z" fill="#1010f0"/></svg>

<!-- sch.html -->
<svg style="left:0;top:0" width="1440" height="900" viewBox="0 0 1440 900">
<path d="M110.7 496.3L110.7 485.4L382.7 485.4L382.7 571.3M110.7 514.6L110.7 530M110.7 556.6L110.7 589.3M110.7 569.3L137.7 569.3L137.7 543.3M110.7 607.6L110.7 627.3M105.5 627.3h10.4L110.7 632.9ZM124.4 543.3L253.3 543.3M164.3 485.4L164.3 496.3M164.3 514.6L164.3 530M164.3 521L190.7 521L190.7 550.3M190.7 567.6L190.7 583L164.3 583M164.3 556.6L164.3 621.3M164.3 592L204.7 592L204.7 608.5M204.7 612L204.7 627.3M199.5 627.3h10.4L204.7 632.9ZM164.3 639.3L164.3 677M164.3 655L206.3 655M224.7 655L325.3 655M199.7 655L199.7 681.6L216.6 681.6M219.4 681.6L235.6 681.6L235.6 655M213.1 485.4L213.1 515M213.1 518.5L213.1 543.3M231 543.3L231 569.3L246 569.3M253 569.3L267 569.3M267 485.4L267 496.3M267 514.6L267 530M267 556.6L267 579.7M267 586.7L267 622M267 625.8L267 655M267 596.4L278.3 596.4M296.7 596.4L311.6 596.4M303 596.4L303 698.7L276 698.7M244.5 712.3L244.5 681.7L260.6 681.7M263.4 681.7L303 681.7M325.3 485.4L325.3 583M325.3 609.8L325.3 621.3M325.3 639.3L325.3 730.3M325.3 663.7L333 663.7M333 659.7H349L352.8 663.7L349 667.7H333ZM325.3 681.7L344.3 681.7M362.7 681.7L382.7 681.7M382.7 589.3L382.7 736.3M382.7 690.7L405.2 690.7L405.2 703.3M400 703.3h10.4L405.2 708.9ZM382.7 754.3L382.7 802L164.3 802L164.3 786.4M66 709.7L66 690.4L96.6 690.4M99.4 690.4L151.6 690.4M66 727.7L66 743.3M60.8 743.3h10.4L66 748.9ZM119.7 690.4L119.7 705.3M119.7 723.6L119.7 743.3M114.5 743.3h10.4L119.7 748.9ZM164.3 703.6L164.3 768.3M164.3 712.3L262.4 712.3M276 725.5L276 768.3M276 743.7L311.6 743.7M276 786.4L276 802M325.3 757L325.3 768.3M325.3 786.4L325.3 802" fill="none" stroke="#2626ff" stroke-width="1.08" stroke-linejoin="miter"/>
<path d="M106.7 496.3h8v18.3h-8ZM124.4 534V552.6M124.4 538.7L110.7 529.9M124.4 547.9L110.7 556.7M106.7 589.3h8v18.3h-8ZM160.3 496.3h8v18.3h-8ZM186.8 550.3h7.8v17.4h-7.8ZM151.6 534V552.6M151.6 538.7L164.3 529.9M151.6 547.9L164.3 556.7M199.8 608.1q4.9 2.4 9.8 0M199.8 611.8h9.8M205.9 614.9h2.6M207.2 613.6v2.6M160.3 621.3h8v18h-8ZM206.3 651.3h18.4v7.4h-18.4ZM216.6 676.8v9.6M219.4 676.8v9.6M208.2 515.1h9.8M208.2 518.8q4.9 -2.4 9.8 0M209.5 512.2h2.6M210.8 510.9v2.6M246.2 565.7L252.6 569.3L246.2 572.9ZM252.9 565.5L252.9 573.1M263 496.3h8v18.3h-8ZM253.3 534V552.6M253.3 538.7L267 529.9M253.3 547.9L267 556.7M262.6 579.8L271.4 579.8M267 580.2L271.2 586.7L262.8 586.7ZM262.1 622.3h9.8M262.1 626q4.9 -2.4 9.8 0M263.4 619.4h2.6M264.7 618.1v2.6M278.3 592.5h18.4v8h-18.4ZM260.6 676.9v9.6M263.4 676.9v9.6M311.6 587.1V605.7M311.6 591.8L325.3 583M311.6 601L325.3 609.8M320.6 621.3h8v18h-8ZM344.3 677.7h18.4v7.2h-18.4ZM382.7 571.3a9 9 0 1 0 0.01 0ZM380.5 575.3h4.4M380.5 586.7h4.4M382.7 584.3v4.6M382.7 736.3a9 9 0 1 0 0.01 0ZM380.5 740.3h4.4M380.5 751.7h4.4M382.7 749.3v4.6M96.6 685.6v9.6M99.4 685.6v9.6M66 709.7a9 9 0 1 0 0.01 0ZM63.8 714.1h4.4M66 711.9v4.4M63.8 724.9h4.4M115.8 705.3h7.8v18.3h-7.8ZM151.6 681.1V699.7M151.6 685.8L164.3 677M151.6 695L164.3 703.8M160.4 768.3h7.8v18.1h-7.8ZM262.4 703V721.6M262.4 707.7L276 698.9M262.4 716.9L276 725.7M272.2 768.3h7.6v18.1h-7.6ZM311.6 734.4V753M311.6 739.1L325.3 730.3M311.6 748.3L325.3 757.1M320.5 768.3h8v18.1h-8Z" fill="none" stroke="#141490" stroke-width=".98"/>
<path d="M121.5 536.8L117.2 532.3L115.6 534.8ZM154.5 536.7L160.3 534.5L158.6 532.1ZM256.2 536.8L262.1 534.8L260.5 532.3ZM319.7 606.2L313.8 604.2L315.4 601.7ZM154.5 683.8L160.3 681.6L158.6 679.2ZM270.5 722.1L264.6 720.1L266.2 717.6ZM319.7 753.5L313.8 751.5L315.4 749Z" fill="#c0c0c0" stroke="#141490" stroke-width=".7"/>
<path d="M162.9 484h2.8v2.8h-2.8ZM211.7 484h2.8v2.8h-2.8ZM265.6 484h2.8v2.8h-2.8ZM323.9 484h2.8v2.8h-2.8ZM109.3 567.9h2.8v2.8h-2.8ZM136.3 541.9h2.8v2.8h-2.8ZM145.3 541.9h2.8v2.8h-2.8ZM211.7 541.9h2.8v2.8h-2.8ZM229.6 541.9h2.8v2.8h-2.8ZM162.9 519.6h2.8v2.8h-2.8ZM162.9 581.6h2.8v2.8h-2.8ZM162.9 590.6h2.8v2.8h-2.8ZM162.9 653.6h2.8v2.8h-2.8ZM198.3 653.6h2.8v2.8h-2.8ZM234.2 653.6h2.8v2.8h-2.8ZM265.6 653.6h2.8v2.8h-2.8ZM323.9 653.6h2.8v2.8h-2.8ZM265.6 567.9h2.8v2.8h-2.8ZM265.6 595h2.8v2.8h-2.8ZM301.6 595h2.8v2.8h-2.8ZM301.6 680.3h2.8v2.8h-2.8ZM323.9 662.3h2.8v2.8h-2.8ZM323.9 680.3h2.8v2.8h-2.8ZM381.3 680.3h2.8v2.8h-2.8ZM381.3 689.3h2.8v2.8h-2.8ZM118.3 689h2.8v2.8h-2.8ZM162.9 710.9h2.8v2.8h-2.8ZM243.1 710.9h2.8v2.8h-2.8ZM274.6 742.3h2.8v2.8h-2.8ZM274.6 800.6h2.8v2.8h-2.8ZM323.9 800.6h2.8v2.8h-2.8Z" fill="#0808f8"/>
<g class="sc">
<text x="115.8" y="502.7">R12</text>
<text x="115.8" y="512.7">2k</text>
<text x="169.6" y="502.7">R2</text>
<text x="169.6" y="512.7">1.71k</text>
<text x="272" y="502.7">R10</text>
<text x="272" y="512.7">130</text>
<text x="215" y="511.7">C4</text>
<text x="215.6" y="525.4">100µ</text>
<text x="238" y="518.8">Q6</text>
<text x="236.8" y="526.8">ECG101</text>
<text x="88.6" y="541.8">Q7</text>
<text x="90.2" y="550.6">MP37</text>
<text x="166.8" y="537.4">Q5</text>
<text x="166.6" y="552">MP37</text>
<text x="196.4" y="556.4">R14</text>
<text x="196.4" y="566.6">2.61k</text>
<text x="237.6" y="551.4">D2</text>
<text x="237.6" y="561.8">D311A</text>
<text x="115.8" y="596">R13</text>
<text x="115.8" y="606.7">3k</text>
<text x="242.7" y="594.7">D1</text>
<text x="243.2" y="604.2">D311A</text>
<text x="283" y="590.6">R9</text>
<text x="283" y="605.6">43</text>
<text x="330" y="594">Q4</text>
<text x="330" y="604.7">2N242</text>
<text x="368" y="571.4">V1</text>
<text x="368.6" y="593.4">15</text>
<text x="194" y="604.8">C3</text>
<text x="186.7" y="618.8">220µ</text>
<text x="169.6" y="627.4">R3</text>
<text x="169.6" y="637.4">200</text>
<text x="268.7" y="618.8">C6</text>
<text x="268.7" y="632.2">470µ</text>
<text x="330.3" y="627.4">R8</text>
<text x="330.3" y="637.4">1</text>
<text x="211.3" y="649">R4</text>
<text x="209.6" y="663.8">1.5k</text>
<text x="213.3" y="675.4">C2</text>
<text x="210" y="691.8">100p</text>
<text x="258" y="675.4">C1</text>
<text x="257" y="691.8">51p</text>
<text x="334.4" y="666.2">OUT</text>
<text x="347.8" y="675.4">R11</text>
<text x="351.7" y="690.2">8</text>
<text x="93" y="684">C5</text>
<text x="90.4" y="701.2">1.5µ</text>
<text x="162" y="686.8">MP37</text>
<text x="162" y="697.2">Q1</text>
<text x="72" y="709.8">V3</text>
<text x="125" y="711.8">R1</text>
<text x="125" y="722.4">30k</text>
<text x="72" y="732.4">SINE(0 1.2 1000)</text>
<text x="90" y="756.8">.tran 1</text>
<text x="88.3" y="767.8">.four 1000 20 V(out)</text>
<text x="280.7" y="709.8">Q2</text>
<text x="280.7" y="720.2">AC151</text>
<text x="330" y="741">Q3</text>
<text x="330" y="751.7">2N242</text>
<text x="368" y="736.8">V2</text>
<text x="368.7" y="758.8">15</text>
<text x="169.6" y="774.8">R5</text>
<text x="169.6" y="784.6">680</text>
<text x="281" y="774.8">R6</text>
<text x="281" y="784.6">43</text>
<text x="330" y="774.8">R7</text>
<text x="330" y="784.6">1</text>
</g>
<path d="M434.5 622V633.5M422.8 633.5H446" stroke="#4c4c4c" stroke-width=".9" fill="none"/>
<path d="M433.6 633.2V650L437.4 646.6L440.2 652L442.6 650.8L440 645.6H445Z" fill="#fff" stroke="#000" stroke-width="1.1" stroke-linejoin="round"/>
</svg>
<!-- fft.html -->
<div class="a" style="left:473px;top:467px;width:946px;height:347px;background:#d4d0c8;border:1px solid;border-color:#dedad2 #6c6a64 #6c6a64 #dedad2;box-shadow:inset 1px 1px 0 #f6f4f0,inset -1px -1px 0 #a8a59d;background:#e0dcd4"></div>
<div class="a" style="left:476px;top:470px;width:941px;height:13px;background:linear-gradient(90deg,#0a246a 0%,#2a4690 20%,#5b7ab8 50%,#86a6da 75%,#a6caf0 100%)"></div>
<svg style="left:477px;top:470px" width="12" height="13" viewBox="0 0 12 13"><rect x="0" y="0" width="12" height="12" fill="#c6c6c6"/><path d="M0.5 7.2L2.5 6.3L4 7L6 6.2L8 7L10 6.3L12 6.6" stroke="#e82020" stroke-width="1" stroke-dasharray="2 1" fill="none"/><path d="M0 9.6H12" stroke="#2030c0" stroke-width="1.2"/><path d="M0.5 0V12M0 11.5H12" stroke="#505050" stroke-width=".8" stroke-dasharray="1 1"/></svg>
<div class="t w" style="left:490.5px;top:473px;color:#fff;letter-spacing:.24px;font-size:8.1px">bokarev_08.fft</div>
<div class="btn" style="left:1378px;top:472px;width:11px;height:10px"><i class="a" style="left:2px;top:5px;width:5px;height:2px;background:#000"></i></div>
<div class="btn" style="left:1390px;top:472px;width:11px;height:10px"><i class="a" style="left:1px;top:0px;width:7px;height:7px;border:1px solid #000;border-top-width:2px"></i></div>
<div class="btn" style="left:1403px;top:472px;width:12px;height:10px"><svg style="left:2px;top:1px" width="7" height="6" viewBox="0 0 7 6"><path d="M0.5 0L6.5 6M6.5 0L0.5 6" stroke="#000" stroke-width="1.4"/></svg></div>
<div class="a" style="left:477px;top:485px;width:938px;height:325px;background:#000"></div>
<svg style="left:0;top:0" width="1440" height="900" viewBox="0 0 1440 900">
<g fill="none" stroke="#a6a6a6" stroke-width="1" shape-rendering="crispEdges">
<path d="M510 499.5H1374.5V790.5M515.5 499.5V790.5M510 790.5H1374.5"/>
<path d="M510 521.5H515.5M510 544.5H515.5M510 566.5H515.5M510 589.5H515.5M510 611.5H515.5M510 633.5H515.5M510 656.5H515.5M510 678.5H515.5M510 700.5H515.5M510 723.5H515.5M510 745.5H515.5M510 768.5H515.5M556.5 790.5V794.0M610.5 790.5V794.0M652.5 790.5V794.0M686.5 790.5V794.0M714.5 790.5V794.0M739.5 790.5V794.0M761.5 790.5V794.0M910.5 790.5V794.0M986.5 790.5V794.0M1040.5 790.5V794.0M1081.5 790.5V794.0M1115.5 790.5V794.0M1144.5 790.5V794.0M1169.5 790.5V794.0M1191.5 790.5V794.0M1340.5 790.5V794.0M781.5 790.5V796.5M1210.5 790.5V796.5"/>
</g>
<text class="ax" x="509.5" y="503.4" text-anchor="end" textLength="24.5" lengthAdjust="spacingAndGlyphs">40dB</text>
<text class="ax" x="509.5" y="525.8" text-anchor="end" textLength="24.5" lengthAdjust="spacingAndGlyphs">20dB</text>
<text class="ax" x="509.5" y="548.2" text-anchor="end" textLength="18.5" lengthAdjust="spacingAndGlyphs">0dB</text>
<text class="ax" x="509.5" y="570.6" text-anchor="end" textLength="27" lengthAdjust="spacingAndGlyphs">-20dB</text>
<text class="ax" x="509.5" y="592.9" text-anchor="end" textLength="27" lengthAdjust="spacingAndGlyphs">-40dB</text>
<text class="ax" x="509.5" y="615.3" text-anchor="end" textLength="27" lengthAdjust="spacingAndGlyphs">-60dB</text>
<text class="ax" x="509.5" y="637.7" text-anchor="end" textLength="27" lengthAdjust="spacingAndGlyphs">-80dB</text>
<text class="ax" x="509.5" y="660.1" text-anchor="end" textLength="33" lengthAdjust="spacingAndGlyphs">-100dB</text>
<text class="ax" x="509.5" y="682.5" text-anchor="end" textLength="33" lengthAdjust="spacingAndGlyphs">-120dB</text>
<text class="ax" x="509.5" y="704.9" text-anchor="end" textLength="33" lengthAdjust="spacingAndGlyphs">-140dB</text>
<text class="ax" x="509.5" y="727.2" text-anchor="end" textLength="33" lengthAdjust="spacingAndGlyphs">-160dB</text>
<text class="ax" x="509.5" y="749.6" text-anchor="end" textLength="33" lengthAdjust="spacingAndGlyphs">-180dB</text>
<text class="ax" x="509.5" y="772" text-anchor="end" textLength="33" lengthAdjust="spacingAndGlyphs">-200dB</text>
<text class="ax" x="509.5" y="794.4" text-anchor="end" textLength="33" lengthAdjust="spacingAndGlyphs">-220dB</text>
<text class="ax" x="781.5" y="806.3" text-anchor="middle" textLength="23.5" lengthAdjust="spacingAndGlyphs">1KHz</text>
<text class="ax" x="1210.5" y="806.3" text-anchor="middle" textLength="29" lengthAdjust="spacingAndGlyphs">10KHz</text>
<text x="945" y="495.6" text-anchor="middle" textLength="28" lengthAdjust="spacingAndGlyphs" style="font:bold 10px 'Liberation Sans',sans-serif;fill:#00c800">V(out)</text>
<text x="546.5" y="574.3" textLength="123" lengthAdjust="spacingAndGlyphs" style="font:bold 24.5px 'DejaVu Sans',sans-serif;fill:#ff0000">R13 = 3K</text>
<defs><linearGradient id="spk" gradientUnits="userSpaceOnUse" x1="0" y1="585" x2="0" y2="706"><stop offset="0" stop-color="#009400"/><stop offset=".5" stop-color="#00a400"/><stop offset=".7" stop-color="#00cc00"/><stop offset="1" stop-color="#00f000"/></linearGradient></defs>
<path fill="none" stroke="url(#spk)" stroke-width="1" d="M857.5 704.2V647M910.5 704.2V590M952.5 704.2V647.5M986.5 704.2V588M1015.5 704.2V642.7M1040.5 702.2V601.7M1062.5 702.2V638M1081.5 702.2V615.7M1099.5 702.2V640M1115.5 702.2V610M1130.5 702.2V642.7M1144.5 702.2V600M1157.5 702.2V646M1169.5 702.2V600.7M1180.5 702.2V650M1191.5 702.2V604.2M1201.5 702.2V648.3M1210.5 702.2V610M1220.5 702.2V642.5M1228.5 702.2V618M1237.5 702.2V642.5M1245.5 700.2V610.3M1252.5 700.2V655.3M1259.5 700.2V612.5M1266.5 700.2V645.8M1273.5 700.2V611.2M1280.5 700.2V638.8M1286.5 700.2V615M1292.5 700.2V639.5M1298.5 700.2V622.5M1304.5 700.2V639.5M1310.5 700.2V631.2M1315.5 700.2V633M1320.5 700.2V610.3M1325.5 700.2V634.2M1330.5 700.2V622.2M1335.5 700.2V631.2M1340.5 700.2V618.7M1344.5 700.2V630M1349.5 700.2V603M1353.5 700.2V631.2M1358.5 700.2V609.2M1362.5 700.2V632M1366.5 700.2V607.2M1370.5 700.2V623M1374.5 700.2V610"/>
<path fill="none" stroke="#00e800" stroke-width="1.2" d="M857.1 704.2V680.8M857.5 704.2V695M910.1 704.2V648.7M910.5 704.2V685.9M952.1 704.2V679.1M952.5 704.2V695.1M986.1 704.2V646M986.5 704.2V685.6M1015.1 704.2V673.1M1015.5 704.2V694.4M1040.1 702.2V665.4M1040.5 702.2V686.1M1062.1 702.2V679.5M1062.5 702.2V691.9M1081.1 702.2V653.8M1081.5 702.2V688.4M1099.1 702.2V676.4M1099.5 702.2V692.2M1115.1 702.2V664.5M1115.5 702.2V687.4M1130.1 702.2V666.6M1130.5 702.2V692.7M1144.1 702.2V654.4M1144.5 702.2V685.8M1157.1 702.2V670.8M1157.5 702.2V693.2M1169.1 702.2V654.6M1169.5 702.2V686M1180.1 702.2V675.6M1180.5 702.2V693.8M1191.1 702.2V664.2M1191.5 702.2V686.5M1201.1 702.2V674.8M1201.5 702.2V693.6M1210.1 702.2V649.9M1210.5 702.2V687.4M1220.1 702.2V673.5M1220.5 702.2V692.6M1228.1 702.2V657.1M1228.5 702.2V688.7M1237.1 702.2V671.3M1237.5 702.2V692.6M1245.1 700.2V667.3M1245.5 700.2V685.8M1252.1 700.2V676M1252.5 700.2V693M1259.1 700.2V656.5M1259.5 700.2V686.2M1266.1 700.2V677.1M1266.5 700.2V691.5M1273.1 700.2V668.4M1273.5 700.2V686M1280.1 700.2V665.4M1280.5 700.2V690.4M1286.1 700.2V660.3M1286.5 700.2V686.6M1292.1 700.2V668M1292.5 700.2V690.5M1298.1 700.2V655.9M1298.5 700.2V687.8M1304.1 700.2V668.1M1304.5 700.2V690.5M1310.1 700.2V660.2M1310.5 700.2V689.2M1315.1 700.2V670M1315.5 700.2V689.4M1320.1 700.2V650.7M1320.5 700.2V685.8M1325.1 700.2V669.8M1325.5 700.2V689.6M1330.1 700.2V654.7M1330.5 700.2V687.7M1335.1 700.2V660.9M1335.5 700.2V689.2M1340.1 700.2V669.7M1340.5 700.2V687.2M1344.1 700.2V673.2M1344.5 700.2V689M1349.1 700.2V660.9M1349.5 700.2V684.6M1353.1 700.2V659.4M1353.5 700.2V689.2M1358.1 700.2V658.4M1358.5 700.2V685.6M1362.1 700.2V665.6M1362.5 700.2V689.3M1366.1 700.2V660.7M1366.5 700.2V685.3M1370.1 700.2V663.4M1370.5 700.2V687.8M1374.1 700.2V659.9M1374.5 700.2V685.8"/>
<path fill="none" stroke="#00b800" stroke-width="1" d="M1345.5 708.2V734M1359.5 708.2V725M1365.5 708.2V725M1324.5 708.2V719.5M1330.5 708.2V719M1229.5 708.2V716.5M1234.5 708.2V718.5M1243.5 708.2V718M1253.5 708.2V715M1266.5 708.2V715.5M1272.5 708.2V715.5M1281.5 708.2V714M1287.5 708.2V716M1299.5 708.2V716.5M1202.5 708.2V714.5M1337.5 708.2V713.5M1340.5 708.2V713.5M1350.5 708.2V718M1370.5 708.2V714M1086.5 708.2V737M1130.5 708.2V715M1152.5 708.2V714.5M1176.5 708.2V714M1190.5 708.2V714.5M1040.5 708.2V713.5M1010.5 708.2V713M964.5 708.2V713M1314.5 708.2V715M1306.5 708.2V714"/>
<polyline fill="none" stroke="#00ec00" stroke-width="1.15" stroke-linejoin="round" points="515.5,704.2 516,704.2 516.5,704.5 517,704.1 517.5,704.4 518,704.1 518.5,704.6 519,704.5 519.5,704.7 520,704.4 520.5,704.5 521,704.4 521.5,704.3 522,704.5 522.5,704.3 523,704.4 523.5,704.6 524,704.5 524.5,704.4 525,704.8 525.5,704.5 526,704.4 526.5,704.5 527,704.4 527.5,704.4 528,704.5 528.5,704.8 529,704.5 529.5,704.6 530,704.6 530.5,704.9 531,704.5 531.5,704.4 532,704.9 532.5,704.3 533,704.5 533.5,704.7 534,704.9 534.5,704.4 535,704.2 535.5,704.7 536,704.5 536.5,704.5 537,704.7 537.5,704.6 538,704.6 538.5,704.5 539,704.8 539.5,704.9 540,704.6 540.5,704.5 541,704.7 541.5,704.7 542,704.5 542.5,704.6 543,704.8 543.5,704.6 544,704.6 544.5,704.7 545,704.7 545.5,704.7 546,704.4 546.5,705 547,704.7 547.5,704.5 548,704.8 548.5,704.7 549,704.7 549.5,704.9 550,705.1 550.5,704.8 551,705 551.5,705.1 552,704.6 552.5,704.6 553,704.9 553.5,704.5 554,704.7 554.5,704.9 555,704.9 555.5,704.8 556,704.5 556.5,705.1 557,704.9 557.5,704.9 558,704.9 558.5,704.5 559,704.6 559.5,704.6 560,705.1 560.5,704.7 561,704.8 561.5,704.8 562,704.9 562.5,704.9 563,704.9 563.5,704.6 564,704.3 564.5,704.9 565,704.9 565.5,705 566,704.8 566.5,704.7 567,704.9 567.5,704.6 568,704.7 568.5,704.7 569,704.9 569.5,705.2 570,705 570.5,705.1 571,704.9 571.5,704.9 572,704.8 572.5,704.9 573,704.5 573.5,704.7 574,704.7 574.5,705 575,705 575.5,705.1 576,705.2 576.5,704.9 577,705.1 577.5,705.3 578,704.9 578.5,705.1 579,704.9 579.5,704.7 580,705 580.5,704.8 581,705 581.5,704.9 582,705 582.5,704.6 583,705.3 583.5,705.2 584,704.9 584.5,704.9 585,705 585.5,705.1 586,705.1 586.5,705.1 587,704.7 587.5,704.8 588,705.2 588.5,705.1 589,704.8 589.5,704.9 590,704.8 590.5,704.9 591,705.2 591.5,705 592,705.2 592.5,705.1 593,704.8 593.5,705 594,705.5 594.5,705 595,704.9 595.5,705.3 596,705.1 596.5,705.1 597,705.3 597.5,704.8 598,705.2 598.5,705 599,704.9 599.5,705 600,705.3 600.5,705.1 601,704.8 601.5,705 602,705.4 602.5,705.3 603,705 603.5,705.6 604,705.1 604.5,705 605,705.2 605.5,705.3 606,705.5 606.5,705.4 607,705.1 607.5,705.1 608,705 608.5,705.2 609,705.1 609.5,705.3 610,705 610.5,705.1 611,705.1 611.5,705 612,705 612.5,705.1 613,705.1 613.5,705.3 614,705.3 614.5,705 615,705.3 615.5,705.3 616,705.5 616.5,705.2 617,705.2 617.5,705.2 618,705.3 618.5,705.4 619,705.3 619.5,705.3 620,705.4 620.5,705.3 621,705.4 621.5,705.2 622,705.4 622.5,705.3 624.5,703 626.3,697.5 627.6,696 629,698 630.6,703.5 632.5,705.4 633,705.2 633.5,705.4 634,705.5 634.5,705.3 635,705.3 635.5,705.8 636,705.3 636.5,705.3 637,705.4 637.5,705.5 638,705.5 638.5,705.6 639,705.6 639.5,705.4 640,705.4 640.5,705.3 641,705.2 641.5,705.4 642,705.6 642.5,705.5 643,705.6 643.5,705.7 644,705.5 644.5,705.9 645,705.4 645.5,705.4 646,705.5 646.1,705.6 647.5,705 648.7,692 649.7,672 650.6,657 651.6,652 652.6,653.5 653.5,660 654.4,676 655.3,697 656.1,706.5 658.1,706 658.5,705.5 659,705.5 659.5,705.5 660,705.5 660.5,705.7 661,705.6 661.5,705.7 662,705.5 662.5,705.5 663,705.6 663.5,705.6 664,705.9 664.5,705.5 665,705.7 665.5,705.7 666,705.5 666.5,705.8 667,705.7 667.5,705.4 668,705.8 668.5,705.9 669,705.6 669.5,706 670,705.8 670.5,705.6 671,705.8 671.5,705.7 672,705.5 672.5,705.4 673,705.8 673.5,705.7 674,705.9 674.5,705.8 675,705.7 675.5,705.7 676,706.1 676.5,706.1 677,705.9 677.5,705.7 678,705.6 678.5,705.8 679,706.1 679.5,705.9 680,705.8 680.5,705.6 681,705.9 681.5,705.7 682,705.8 682.5,706 683,706 683.5,705.9 684,705.8 684.5,705.9 685,706.2 685.5,705.9 686,705.7 686.5,706.1 687,705.9 687.5,706.5 688,705.8 688.5,705.9 690,708 691.4,713 692,718.5 692.6,713.5 694,708 695.5,706 696,705.9 696.5,706.1 697,706.1 697.5,706 698,706 698.5,705.7 699,705.9 699.5,706.1 700,705.9 700.5,705.9 701,706.1 701.5,705.9 702,705.9 702.5,706.2 703,706 703.5,706.3 704,706.1 704.5,706.2 705,706.2 705.5,705.7 706,706 706.5,705.8 707,706 707.5,706 708,706.3 708.5,706.1 709,706.4 709.5,706 710,706.1 710.5,706.1 711,706.3 711.5,706.1 712,706 712.5,706 713,705.9 713.5,706.3 714,706.3 714.5,706.2 715,706.2 715.5,706 716,706.1 716.5,706.3 717,706 717.5,706 718,706.4 718.5,706.4 719,706.2 719.5,706.3 720,706.2 720.5,706.4 721,706.1 721.5,706.2 722,706.3 722.5,706.5 723,706.2 723.5,706.2 724,706.1 724.5,706.1 725,706.1 725.5,706.2 726,706.4 726.5,706.1 727,706.1 727.5,706.2 728,706.3 728.5,706.4 729,706 729.5,706.3 730,706.1 730.5,706.4 731,706.1 731.5,706.1 732,706.1 732.5,706.3 733,706.1 733.5,706.3 734,706.3 734.5,706.3 735,706.4 735.5,706.5 736,706.2 736.5,706.3 737,706.3 737.5,705.9 738,706.4 738.5,706.2 739,706.2 739.5,706.3 740,706.4 740.5,706.4 741,706.5 741.5,706.2 742,706.5 742.5,706.5 742.8,706.4 745,710.6 747.2,706.4 747.5,706.1 748,706.8 748.5,706.3 749,706.1 749.5,705.9 750,706.5 750.5,706.7 751,706.7 751.5,706.4 752,706.8 752.5,706.4 753,706.3 753.5,706.5 754,706.5 754.5,706.5 754.8,706.5 757,711.6 759.2,706.5 759.5,706.6 760,706.7 760.5,706.3 761,706 761.5,706.4 762,706.3 762.5,706.6 763,706.5 763.5,706.9 764,706.7 764.5,706.5 765,706.6 765.5,705.9 766,706.4 766.5,706.4 767,706.6 767.5,706.7 768,706.6 768.5,706.8 769,706.4 769.5,706.7 770,706.6 770.5,706.6 771,706.7 771.5,706.5 772,706.7 772.5,706.6 773,706.9 773.5,706.6 774,706.7 774.5,707.3 774.9,706 777.8,705 779.2,703 779.9,694 780.3,640 780.8,590 781.2,540 781.4,527 781.7,560 782.1,640 782.5,700 782.9,712.5 783.9,711 785.9,709.6 789.2,708.2 791,697.5 792.8,708.2 793,708.4 793.5,708.2 794,708.3 794.5,708.2 795,708.1 795.5,708.3 796,708.4 796.5,708.1 797,708.3 797.5,708 798,708.3 798.5,708.2 799,707.8 799.5,708.5 800,708.2 801.5,702 803,708.2 803.5,708.1 804,707.7 804.5,708.1 805,708.8 805.5,708.1 806,708.3 806.5,708.4 807,708.3 807.5,708.2 808,708.7 808.5,708.2 809,708.3 809.5,708.2 810,707.8 810.5,708.3 811,708.2 811.5,708.4 812,708.4 812.5,708.7 813,707.6 813.5,708 814,708 814.5,707.9 815,708.3 815.5,708.2 816,708.2 816.5,707.7 817,707.9 817.5,708.2 818,708.1 818.5,708 819,708.2 819.5,708.1 820,707.8 820.5,708.8 821,708 821.5,708.4 822,708.4 822.5,708.5 823,708 823.5,707.9 824,708.3 824.5,708.3 825,707.4 825.5,707.3 826,708 826.5,708.1 827,708.1 827.5,708.3 828,707.9 828.5,709.1 829,708.5 829.5,708.7 830,708.3 830.5,707.5 831,708.3 831.5,708 832,708.4 832.5,708.2 833,708.4 833.5,707.9 834,708.1 834.5,708.2 835,707.9 835.5,708 836,708.4 836.5,708.9 837,708.1 837.5,708.5 838,707.8 838.5,708 839,708.3 839.5,708.4 840,707.8 840.5,708.4 841,708.3 841.5,708.7 842,708.6 842.5,708.4 843,708.1 843.5,708.3 844,707.9 844.5,707.9 845,707.5 845.5,707.7 846,707.7 846.4,708.2 848,711.8 849.6,708.2 850,708.3 850.1,708.2 851.4,697.5 852.7,708.2 853,708.9 853.5,708.6 854,707.4 854.5,708 855,707.6 855.3,707.9 856,706.7 856.6,704.7 856.8,703.2 857.2,703.2 857.5,704.7 858.1,706.7 858.7,707.9 859,708.4 859.5,708.5 859.9,708.2 861.5,713 863.1,708.2 863.2,698 864.5,708.2 865,707.6 865.5,709.1 866,708 866.5,707.9 867,707.4 867.5,708.2 868,707.6 868.5,708.3 869,708.7 869.5,708.5 870,708 870.5,708.7 871,708.1 871.5,708.2 872,708.2 872.5,708 873,708.4 873.5,707.6 874,707.4 874.5,708.7 875,707.9 875.5,708 876,708.3 876.5,708 877,707.7 877.5,708.1 878,707.8 878.5,708.4 879,708 879.5,708.1 880,708.5 880.5,707.5 881,707.5 881.5,708.5 882,708.8 882.5,708.2 883,707.9 883.5,708.8 884,708.4 884.5,708.7 885,707.3 885.5,708.1 886,707.7 886.5,707.7 887,708.5 887.5,708.5 888,708 888.5,708.1 889,708.9 889.5,708.5 890,708.1 890.5,708.4 891,708.2 891.5,707.6 892,707.9 892.5,708.3 893,708.5 893.5,707.6 894,707.8 894.5,707.9 895,707.4 895.5,708.7 896,708.4 896.5,708.8 897,707.1 897.5,707.8 898,709.1 898.5,707.5 899,707.3 899.5,708.3 900,709 900.5,708.5 901,707.7 901.5,708.5 902,708.4 902.5,708.3 903,708.4 903.1,708.2 904.3,699.5 905.5,708.1 905.5,708.2 906,707.2 906.5,708.5 907,707.4 907.5,709.4 908,707.6 908.5,707.2 909,707.2 909,707.9 909.7,706.7 910.3,704.7 910.5,703.2 910.9,703.2 911.2,704.7 911.7,706.7 912.4,707.9 912.5,707.8 913,707.4 913.5,708.7 914,708.5 914.5,707.7 915,708.1 915.4,708.2 916.6,698.5 917.8,708.2 918,708.2 918.5,708.4 918.6,708.2 919.6,712.5 920.6,708.2 921,708.5 921.5,707.7 922,708.3 922.5,708.1 923,706.9 923.5,707.8 924,708.5 924.5,707.3 925,708.2 925.5,708.4 926,707.5 926.5,708 927,708.7 927.5,708.6 928,707.6 928.5,708.8 929,708.4 929.5,708.3 930,709.1 930.5,708.6 931,708.4 931.5,708.8 932,708.6 932.5,708.9 933,708.1 933.5,707.1 934,709.1 934.5,708.7 935,708.5 935.5,708.2 936,708.1 936.5,708.3 937,707.6 937.5,708.7 938,708.2 938.5,707.6 939,708.4 939.5,708 940,708.2 940.5,708.5 941,708.2 942,712.5 943,708.2 943.5,709.1 944,707.9 944.5,708 944.5,708.2 945.6,701 946.7,708.2 947,708.5 947.5,709 948,707.7 948.5,708.1 949,708.1 949.5,709.3 950,708.4 950.5,707.1 950.7,707.9 951.3,706.7 951.9,704.7 952.2,703.2 952.6,703.2 952.8,704.7 953.4,706.7 954.1,707.9 954.5,708.9 955,709.1 955.5,706.6 956,709 956.5,708.7 956.7,708.2 957.8,701 958.9,708.2 959,708.3 959.5,708 960,707.9 960.5,708.6 961,708.9 961.5,708.8 962,708.5 962.5,709.3 963,707.3 963.5,708.2 964,708.3 964.5,709 965,706.7 965.5,707.9 966,708 966.5,708.3 967,709.8 967.5,708.4 968,708.1 968.5,708.5 969,708.9 969.5,708.1 970,709.4 970.5,707.3 971,709.1 971.5,708.7 972,708.9 972.5,709.3 973,708 973.5,708.5 974,708.4 974.5,707.8 975,707.7 975.5,707.6 976,708.8 976.5,706.6 977,707.3 977.5,708.3 978,709.1 978.5,708.1 979,709.1 979.5,708.2 979.5,708.2 980.6,699.5 981.7,708.2 982,708.3 982.5,707.4 983,708.6 983.5,707.2 984,707.4 984.5,709 984.7,707.9 985.4,706.7 985.9,704.7 986.2,703.2 986.6,703.2 986.8,704.7 987.4,706.7 988.1,707.9 988.5,707.2 989,706.8 989.5,707.6 990,708.9 990.5,707.8 991,706.4 991.5,708.2 991.5,710.4 992.6,699.5 993.7,708.2 994,708.1 994.5,707 995,708.6 995.5,707.4 996,708.1 996.5,708.8 997,707.9 997.5,706.8 998,707.7 998.5,708.7 999,708.8 999.5,707.2 1000,708.2 1000.5,708.4 1001,709 1001.5,708.5 1002,708.3 1002.5,708 1003,708.6 1003.5,708.8 1004,708.1 1004.5,708 1005,709.6 1005.5,708.2 1006,707.6 1006.5,708.7 1007,707.2 1007.5,707.3 1008,708.9 1008.5,708.2 1009.5,701 1010.5,708.2 1011,707.9 1011.5,708.4 1012,708.4 1012.5,708.1 1013,707.1 1013.4,707.9 1014.1,706.7 1014.7,704.7 1014.9,703.2 1015.3,703.2 1015.6,704.7 1016.2,706.7 1016.8,707.9 1017,708 1017.5,708 1018,707.1 1018.5,707.7 1019,707.8 1019.3,708.2 1020.3,701 1021.3,708.2 1021.5,708.5 1022,708.4 1022.5,707 1023,708.5 1023.5,709.3 1024,707.3 1024.5,709.3 1025,708.7 1025.5,708.4 1026,707.8 1026.5,708.2 1027,707.5 1027.5,708.2 1028,708.2 1028.5,708.3 1029,707.1 1029.5,709 1030,707.6 1030.5,708.5 1031,708.7 1031.5,708 1032,710.4 1032.5,708.3 1033,708.6 1033.5,708.2 1034.5,700.5 1035.5,708.2 1036,707.7 1036.5,708.9 1037,709 1037.5,707.8 1038,707.3 1038.3,707.9 1039,706.1 1039.6,703.3 1039.8,701.2 1040.2,701.2 1040.5,703.3 1041.1,706.1 1041.7,707.9 1042,707.5 1042.5,707.7 1043,707.4 1043.5,708.6 1044,706.5 1044.5,708.1 1044.6,708.2 1045.6,700.5 1046.6,708.2 1047,707.7 1047.5,707.3 1048,707.2 1048.5,708.7 1049,708.1 1049.5,708.3 1050,707.3 1050.5,709.3 1051,709 1051.5,708.9 1052,707.2 1052.5,710.6 1053,709 1053.5,707.2 1054,709.1 1054.5,708.1 1055,707.5 1055.5,707.5 1056,708.2 1057,702 1058,708.2 1058.5,708.4 1059,707.9 1059.5,708 1060,708.8 1060.3,707.9 1061,706.1 1061.6,703.3 1061.8,701.2 1062.2,701.2 1062.5,703.3 1063,706.1 1063.7,707.9 1064,708.4 1064.5,707.4 1065,707.9 1065.5,709.1 1065.6,708.2 1066.4,713.5 1067.2,708.2 1068,708.2 1068.5,708.3 1069,707.7 1069.5,707.8 1070,708.1 1070.5,709.5 1071,708.1 1071.5,707.4 1072,708.5 1072.5,705.6 1073,707.3 1073.5,707.6 1074,708.5 1074.5,705.9 1074.6,708.2 1075.6,700 1076.6,708.2 1077,707.7 1077.5,708.7 1078,707 1078.5,708.4 1079,708.5 1079.5,709.3 1080,707.9 1080.7,706.1 1081.2,703.3 1081.5,701.2 1081.9,701.2 1082.1,703.3 1082.7,706.1 1083.4,707.9 1083.5,708.2 1084,709.4 1084.5,708.3 1085,706.7 1085.2,708.2 1086,737 1086.8,708.2 1087,700.5 1088,708.2 1088.5,708.6 1089,708.7 1089.5,709.2 1090,708.8 1090.5,706.6 1091,706.7 1091.5,709.1 1092,709.6 1092.2,708.2 1093,714.5 1093.8,708.2 1094,709.2 1094.5,709.9 1095,708.8 1095.5,709.5 1096,709.5 1096.5,707.4 1097,709.5 1097.5,707.4 1097.8,707.9 1098.4,706.1 1099,703.3 1099.3,701.2 1099.7,701.2 1099.9,703.3 1100.5,706.1 1101.2,707.9 1101.5,707.2 1102,708.8 1102.5,708.8 1103,708.1 1103.5,707.1 1104,706.6 1104.5,708.2 1105,708.1 1105.5,709.1 1106,707.9 1106.5,709.2 1107,706.9 1107.5,706.3 1108,709.2 1108.5,707.7 1109,708.2 1110,701 1111,708.2 1111.5,708.4 1112,707.5 1112.5,708.1 1113,708.2 1113.5,708.7 1114,706.3 1114.2,707.9 1114.8,706.1 1115.2,703.3 1115.5,701.2 1115.9,701.2 1116.1,703.3 1116.6,706.1 1117.2,707.9 1117.5,710.5 1118,707.8 1118.5,708.4 1119,710.4 1119.5,707.5 1120,708.2 1121,701 1122,708.2 1122.5,707.3 1123,706.9 1123.5,708.1 1124,706.8 1124.5,707.3 1125,708.6 1125.5,708.1 1126,707 1126.5,706.5 1127,707 1127.5,706.5 1128,708.8 1128.5,709.1 1129,708.6 1129.1,707.9 1129.7,706.1 1130.2,703.3 1130.4,701.2 1130.8,701.2 1131.1,703.3 1131.5,706.1 1132.1,707.9 1132.5,706.9 1133,708.5 1133.5,708.7 1134,706.9 1134.5,707.9 1135,708.2 1135.5,708.8 1136,706.2 1136.2,708.2 1137,714.5 1137.8,708.2 1138,706.9 1138.5,709.2 1139,706.8 1139.5,710.8 1140,708.5 1140.5,709 1141,708.1 1141.5,709.3 1142,708.7 1142.5,709.2 1143,707.9 1143.6,706.1 1144,703.3 1144.3,701.2 1144.7,701.2 1144.9,703.3 1145.4,706.1 1146,707.9 1146,710.2 1146.5,707.6 1147,708.7 1147.5,710.8 1148,707.4 1148.5,707.9 1149,707.4 1149.5,707 1150,709 1150.5,707.9 1151,708.4 1151.5,706.1 1152,708.8 1152.5,707.3 1153,705.8 1153.5,707.3 1154,706.2 1154.5,710.2 1155,706.1 1155.5,708.6 1155.8,707.9 1156.4,706.1 1156.9,703.3 1157.1,701.2 1157.5,701.2 1157.8,703.3 1158.2,706.1 1158.8,707.9 1159,708.5 1159.5,707.7 1160,709.1 1160.5,707.3 1161,706.1 1161.5,708.8 1162,709.7 1162.5,708.9 1163,707.1 1163.5,709.7 1164,709.2 1164.2,708.2 1165,714 1165.8,708.2 1166,708.4 1166.5,709 1167,709.4 1167.5,708.3 1167.9,707.9 1168.5,706.1 1168.9,703.3 1169.2,701.2 1169.6,701.2 1169.8,703.3 1170.3,706.1 1170.9,707.9 1171,707.9 1171.5,708.3 1172,708.3 1172.5,709.9 1173,708.9 1173.5,708.3 1174,706.6 1174.5,708.7 1175,706.8 1175.5,709.9 1176,707.3 1176.5,707.4 1177,708 1177.5,706.8 1178,708.9 1178.5,708.6 1179,707.3 1179.2,707.9 1179.8,706.1 1180.2,703.3 1180.5,701.2 1180.9,701.2 1181.1,703.3 1181.6,706.1 1182.2,707.9 1182.5,707.7 1183,707.8 1183.5,708 1184,706.8 1184.5,707 1185,710.7 1185.5,708.4 1186,707 1186.5,707.9 1187,707.5 1187.5,707.6 1188,708.1 1188.5,706.2 1189,705.7 1189.5,707.9 1189.8,707.9 1190.4,706.1 1190.9,703.3 1191.1,701.2 1191.5,701.2 1191.8,703.3 1192.2,706.1 1192.8,707.9 1193,709.8 1193.5,710.2 1194,709.1 1194.5,708.2 1195,709.4 1195.5,709.2 1196,708.9 1196.5,709.3 1197,707.7 1197.5,709.3 1198,709 1198.5,708.8 1199,708 1199.5,707.6 1199.9,707.9 1200.5,706.1 1201,703.3 1201.2,701.2 1201.6,701.2 1201.9,703.3 1202.3,706.1 1202.9,707.9 1203,710.2 1203.5,705.3 1204,709.1 1204.2,708.2 1205,715 1205.8,708.2 1206,709.4 1206.5,709 1207,706.6 1207.5,707.2 1208,709.7 1208.5,709.3 1209,706.6 1209.5,707.9 1210.1,706.1 1210.5,703.3 1210.8,701.2 1211.2,701.2 1211.5,703.3 1211.9,706.1 1212.5,707.9 1213,709.4 1213.5,707.7 1214,709.6 1214.5,706.6 1215,707 1215.5,709 1216,709.7 1216.5,708.2 1217,707.8 1217.5,710.2 1218,709.9 1218.5,708.7 1218.6,707.9 1219.2,706.1 1219.7,703.3 1219.9,701.2 1220.3,701.2 1220.6,703.3 1221,706.1 1221.6,707.9 1222,708.6 1222.5,708.9 1223,709.4 1223.5,707.5 1224,706.4 1224.2,708.2 1225,714.5 1225.8,708.2 1226,706.1 1226.5,709 1227,709.8 1227.3,707.9 1227.9,706.1 1228.3,703.3 1228.6,701.2 1229,701.2 1229.2,703.3 1229.7,706.1 1230.3,707.9 1230.5,711.8 1231,706.9 1231.5,705.7 1231.8,708.2 1232.6,716.5 1233.4,708.2 1233.5,708.2 1234,705.6 1234.5,706.9 1235,708.5 1235.5,709 1235.6,707.9 1236.2,706.1 1236.6,703.3 1236.9,701.2 1237.3,701.2 1237.5,703.3 1238,706.1 1238.6,707.9 1239,709.1 1239.5,706.9 1239.8,708.2 1240.6,715 1241.4,708.2 1241.5,707.5 1242,707.2 1242.5,706 1243,708.2 1243.5,704.6 1243.5,707.9 1244.1,705.5 1244.6,701.9 1244.8,699.2 1245.2,699.2 1245.5,701.9 1245.9,705.5 1246.5,707.9 1247,711.5 1247.5,710.1 1248,708.8 1248.5,707.9 1249,710.2 1249.5,709.4 1250,708.5 1250.5,711.2 1251,708 1251.1,707.9 1251.7,705.5 1252.2,701.9 1252.4,699.2 1252.8,699.2 1253.1,701.9 1253.5,705.5 1254.1,707.9 1254.5,707.7 1255,709.4 1255.5,709 1256,708.5 1256.5,711 1257,708.1 1257.5,711.1 1258,706.6 1258.5,707.9 1259.1,705.5 1259.5,701.9 1259.8,699.2 1260.2,699.2 1260.4,701.9 1260.9,705.5 1261.5,707.9 1261.5,707.8 1262,706.2 1262.2,708.2 1263,714.5 1263.8,708.2 1264,705.4 1264.5,707.8 1265,705.4 1265.5,707.9 1266.1,705.5 1266.5,701.9 1266.8,699.2 1267.2,699.2 1267.4,701.9 1267.9,705.5 1268.5,707.9 1268.5,708.1 1269,710.1 1269.5,708.7 1270,708.7 1270.5,708.2 1271,709.9 1271.5,710.2 1272,707.7 1272.3,707.9 1272.9,705.5 1273.3,701.9 1273.6,699.2 1274,699.2 1274.2,701.9 1274.7,705.5 1275.3,707.9 1275.5,705.9 1276,705.6 1276.5,708.6 1277,706.7 1277.5,708.3 1278,708.4 1278.5,707.1 1278.8,707.9 1279.4,705.5 1279.9,701.9 1280.1,699.2 1280.5,699.2 1280.8,701.9 1281.2,705.5 1281.8,707.9 1282,706.1 1282.5,707.6 1283,711.1 1283.2,708.2 1284,716 1284.8,708.2 1285,709.9 1285.1,707.9 1285.7,705.5 1286.2,701.9 1286.4,699.2 1286.8,699.2 1287.1,701.9 1287.5,705.5 1288.1,707.9 1288.5,709.2 1289,708.8 1289.5,705.9 1290,708.7 1290.5,710.7 1291,709.9 1291.3,707.9 1291.9,705.5 1292.3,701.9 1292.6,699.2 1293,699.2 1293.2,701.9 1293.7,705.5 1294.3,707.9 1294.5,706 1295,706.5 1295.5,707.6 1296,709.6 1296.5,705.7 1297,708.7 1297.2,707.9 1297.8,705.5 1298.2,701.9 1298.5,699.2 1298.9,699.2 1299.1,701.9 1299.6,705.5 1300.2,707.9 1300.5,708.6 1301,708 1301.5,706.6 1302,708.2 1302.5,709.7 1302.9,707.9 1303.5,705.5 1304,701.9 1304.2,699.2 1304.6,699.2 1304.9,701.9 1305.3,705.5 1305.9,707.9 1306,710.6 1306.5,707.9 1307,707.9 1307.5,708.4 1308,709.8 1308.5,709.8 1308.5,707.9 1309.1,705.5 1309.6,701.9 1309.8,699.2 1310.2,699.2 1310.5,701.9 1310.9,705.5 1311.5,707.9 1312,705.5 1312.5,705.8 1313,708.5 1313.5,708.8 1313.9,707.9 1314.5,705.5 1315,701.9 1315.2,699.2 1315.6,699.2 1315.9,701.9 1316.3,705.5 1316.9,707.9 1317,710.8 1317.5,706.4 1317.7,708.2 1318.4,715 1319.1,708.2 1319.2,707.9 1319.8,705.5 1320.2,701.9 1320.5,699.2 1320.9,699.2 1321.1,701.9 1321.6,705.5 1322.2,707.9 1322.5,707.7 1323,707.7 1323.5,708.2 1324,706.8 1324.3,707.9 1324.9,705.5 1325.3,701.9 1325.6,699.2 1326,699.2 1326.2,701.9 1326.7,705.5 1327.3,707.9 1327.5,705.8 1328,709.1 1328.5,710 1329,708.1 1329.3,707.9 1329.9,705.5 1330.3,701.9 1330.6,699.2 1331,699.2 1331.2,701.9 1331.7,705.5 1332.3,707.9 1332.5,709.2 1333,704.3 1333.5,709.6 1334,710.1 1334.1,707.9 1334.7,705.5 1335.1,701.9 1335.4,699.2 1335.8,699.2 1336,701.9 1336.5,705.5 1337.1,707.9 1337.5,704.1 1338,710.2 1338.5,711.5 1338.8,707.9 1339.4,705.5 1339.9,701.9 1340.1,699.2 1340.5,699.2 1340.8,701.9 1341.2,705.5 1341.8,707.9 1342,705 1342.5,707 1343,702.8 1343.4,707.9 1344,705.5 1344.5,701.9 1344.7,699.2 1345.1,699.2 1345.4,701.9 1345.8,705.5 1346.4,707.9 1346.5,707.2 1347,710.4 1347.5,709.5 1347.9,707.9 1348.5,705.5 1349,701.9 1349.2,699.2 1349.6,699.2 1349.9,701.9 1350.3,705.5 1350.9,707.9 1351,711.3 1351.5,704.1 1352,706.3 1352.3,707.9 1352.9,705.5 1353.4,701.9 1353.6,699.2 1354,699.2 1354.3,701.9 1354.7,705.5 1355.3,707.9 1355.5,709.3 1356,709.7 1356.5,708.8 1356.6,707.9 1357.2,705.5 1357.7,701.9 1357.9,699.2 1358.3,699.2 1358.6,701.9 1359,705.5 1359.6,707.9 1360,708.3 1360.5,706.5 1360.8,707.9 1361.4,705.5 1361.8,701.9 1362.1,699.2 1362.5,699.2 1362.7,701.9 1363.2,705.5 1363.8,707.9 1364,705.5 1364.5,709.5 1364.9,707.9 1365.5,705.5 1365.9,701.9 1366.2,699.2 1366.6,699.2 1366.8,701.9 1367.3,705.5 1367.9,707.9 1368,708.2 1368.5,711.7 1368.9,707.9 1369.5,705.5 1370,701.9 1370.2,699.2 1370.6,699.2 1370.9,701.9 1371.3,705.5 1371.9,707.9 1372,709.2 1372.5,709.3 1372.8,707.9 1373.4,705.5 1373.9,701.9 1374.1,699.2 1374.5,699.2 1374.8,701.9 1375.2,705.5 1375.8,707.9"/>
</svg>
<!-- status.html -->
<div class="a" style="left:6px;top:816px;width:1428px;height:16px;background:#d4d0c8;border-top:1px solid #f0eee8"></div>
<div class="t" style="left:8px;top:821.8px;font-family:'DejaVu Sans Condensed','DejaVu Sans',sans-serif;font-size:8px;letter-spacing:.04px;color:#202020">Right-Click to set up magnitude plotting parameters</div>
<div class="a" style="left:1392px;top:818px;width:42px;height:12px;border:1px solid;border-color:#808080 #fff #fff #808080"></div>
<div class="a" style="left:3px;top:832px;width:1434px;height:1px;background:#555"></div>

<!-- rtask.html -->
<div class="a" style="left:3px;top:833px;width:1434px;height:18px;background:#e9e9e9"></div>
<svg style="left:4px;top:832.8px" width="18" height="18" viewBox="0 0 24 24"><path d="M15.500 9.200C11 8 4 11 3.600 16C3.400 20 7 22 10.500 21.800C14 21.600 16.500 19.500 16 17.500C15.500 16 12.500 16 11.500 17.200C10.500 18.200 9 18 9 16.500C9 14.500 12 13.500 14 13C16.500 12.300 17.500 10 15.500 9.200Z" fill="#3a3a3a"/><ellipse cx="3.600" cy="8" rx="1.100" ry="1.700" fill="#3a3a3a" transform="rotate(-30 3.600 8)"/><ellipse cx="6.900" cy="5.800" rx="1.200" ry="1.900" fill="#3a3a3a" transform="rotate(-15 6.900 5.800)"/><ellipse cx="10.800" cy="4.600" rx="1.300" ry="2" fill="#3a3a3a" transform="rotate(5 10.800 4.600)"/><ellipse cx="16.600" cy="4" rx="3.600" ry="2" fill="#3a3a3a" transform="rotate(-25 16.600 4)"/><path d="M18.600 2.400q2.400-.6 3.400 2" stroke="#3a3a3a" stroke-width="1" fill="none"/></svg>
<div class="a" style="left:24.500px;top:833px;width:1.500px;height:18px;background:#9c9c9c"></div>
<svg style="left:29px;top:834.8px" width="15.5" height="14" viewBox="0 0 20 18"><defs><linearGradient id="fg29" x1="0" y1="0" x2="0" y2="1"><stop offset="0" stop-color="#9cc0ea"/><stop offset="1" stop-color="#5e92d2"/></linearGradient></defs><path d="M1 3.400q0-1.800 1.800-1.800h4.600q1.200 0 1.800 1.400h8q1.800 0 1.800 1.800v10.400q0 1.400-1.400 1.400h-15.200q-1.400 0-1.400-1.400z" fill="url(#fg29)" stroke="#3d6fae" stroke-width=".9"/><path d="M1.500 6h17" stroke="#c8dcf4" stroke-width=".9"/><path d="M6 9.600v4M14 9.600v4M8.400 9.400h3.200v4.400h-3.200z" stroke="#2f63ad" stroke-width="1" fill="none" stroke-dasharray="1.500 .8"/></svg>
<svg style="left:46px;top:835.2px" width="15" height="14" viewBox="0 0 20 18"><rect x=".6" y=".8" width="18.800" height="16" rx="2" fill="#555753" stroke="#2e3436" stroke-width="1"/><rect x="2.400" y="2.600" width="15.200" height="10.600" fill="#2e3436" stroke="#888a85" stroke-width=".7"/><path d="M4.600 5.400l3.400 2.400l-3.400 2.400M9 10.600h3.400" stroke="#eeeeec" stroke-width="1.300" fill="none"/><rect x="2.600" y="14.600" width="2.600" height="1" fill="#8ae234"/></svg>
<svg style="left:65px;top:834.5px" width="14" height="15.5" viewBox="0 0 18 20"><path d="M1 4q0-3 3-3h10q3 0 3 3v15h-16z" fill="#d9d9d6" stroke="#888a85" stroke-width="1"/><rect x="3" y="5" width="12" height="5.600" fill="#c4c4c0" stroke="#777" stroke-width=".9"/><rect x="3" y="12" width="12" height="5.600" fill="#c4c4c0" stroke="#777" stroke-width=".9"/><rect x="7" y="7" width="4" height="1.600" fill="#666"/><rect x="7" y="14" width="4" height="1.600" fill="#666"/></svg>
<svg style="left:83px;top:834px" width="13.5" height="15.8" viewBox="0 0 18 21"><rect x=".6" y=".6" width="16.800" height="19.800" rx="1.500" fill="#6d6f6a" stroke="#3c3e3a" stroke-width="1"/><rect x="2.400" y="2.600" width="13.200" height="4.600" rx=".8" fill="#9be44c" stroke="#4e9a06" stroke-width=".6"/><path d="M2.600 10h13M2.600 12.800h13M2.600 15.600h13M2.600 18.200h13" stroke="#babdb6" stroke-width="1.500" stroke-dasharray="2.300 1.200"/></svg>
<svg style="left:100px;top:834.3px" width="15.3" height="15.3" viewBox="0 0 20 20"><rect x="1" y="1" width="18" height="18" fill="#fff" stroke="#0a6a0a" stroke-width="2"/><path d="M3.600 4.400h5l2.600 3.400l3-3.400h3l-4.600 5.400l4.600 5.800h-5l-2.400-3.400l-3 3.400h-3.400l4.800-5.600z" fill="#0a7a0a"/></svg>
<svg style="left:118px;top:834.3px" width="15.3" height="15.3" viewBox="0 0 20 20"><rect x="1" y="1" width="18" height="18" fill="#fff" stroke="#0a0a9a" stroke-width="2"/><path d="M3.400 5h3.200l.6 6l2.400-6h2.600l.4 6l2.400-6h3l-4.400 10h-3l-.4-5.600l-2.400 5.600h-3z" fill="#0a0a9a"/></svg>
<svg style="left:135px;top:833.6px" width="17.5" height="17.5" viewBox="0 0 20 20"><defs><radialGradient id="mbr1" cx=".4" cy=".35" r=".75"><stop offset="0" stop-color="#f4f8fc"/><stop offset=".65" stop-color="#c4d2e8"/><stop offset="1" stop-color="#a8a8cc"/></radialGradient></defs><circle cx="10" cy="10" r="9.600" fill="url(#mbr1)"/></svg>
<svg style="left:163px;top:836px" width="12.5" height="12.5" viewBox="0 0 20 20"><defs><radialGradient id="mbr2" cx=".4" cy=".35" r=".75"><stop offset="0" stop-color="#f0f0f0"/><stop offset=".65" stop-color="#909090"/><stop offset="1" stop-color="#6a6a6a"/></radialGradient></defs><circle cx="10" cy="10" r="9.600" fill="url(#mbr2)"/></svg>
<svg style="left:165.500px;top:839.500px" width="8" height="6" viewBox="0 0 8 6"><path d="M.6 .6l3.400 4.800l3.400-4.800q-3.400 1.400-6.800 0z" fill="#fff"/></svg>
<div class="t" style="left:181.6px;top:836.700px;font-family:'DejaVu Sans',sans-serif;font-size:9.700px;color:#3c3c3c;letter-spacing:0px">[02 - Twenty-One.m...</div>
<svg style="left:299px;top:835.8px" width="12.5" height="12.5" viewBox="0 0 20 20"><defs><radialGradient id="mbr3" cx=".4" cy=".35" r=".75"><stop offset="0" stop-color="#f4f8fc"/><stop offset=".65" stop-color="#c4d2e8"/><stop offset="1" stop-color="#a8a8cc"/></radialGradient></defs><circle cx="10" cy="10" r="9.600" fill="url(#mbr3)"/></svg>
<div class="t" style="left:316.6px;top:836.700px;font-family:'DejaVu Sans',sans-serif;font-size:9.700px;color:#3c3c3c;letter-spacing:0.02px">[Google - Pale Moon]</div>
<svg style="left:434px;top:836.3px" width="12.5" height="11.2" viewBox="0 0 16 15"><defs><linearGradient id="pfa" x1="0" y1="0" x2="0" y2="1"><stop offset="0" stop-color="#a4c4ec"/><stop offset="1" stop-color="#5a8cd0"/></linearGradient></defs><path d="M.6 2.400q0-1.600 1.600-1.600h3.600q1 0 1.600 1.200h6.400q1.600 0 1.600 1.600v9.400q0 1.400-1.400 1.400h-12q-1.400 0-1.400-1.400z" fill="url(#pfa)" stroke="#3a6cae" stroke-width=".9"/><path d="M1 4.600h7" stroke="#d4e4f8" stroke-width=".8"/></svg>
<div class="t" style="left:452.2px;top:836.700px;font-family:'DejaVu Sans',sans-serif;font-size:9.700px;color:#3c3c3c;letter-spacing:-0.05px">Record</div>
<svg style="left:569.4px;top:836.6px" width="12" height="11" viewBox="0 0 12 11"><path d="M.6 4l3-2.600l7.400 1.200l.6 5.400l-4 2.600l-6.400-1.600z" fill="#c81818" stroke="#7a0c0c" stroke-width=".8"/><path d="M3 2.600l5.600 5M8.600 2.400l-4.600 5.400" stroke="#e8c040" stroke-width="1"/><path d="M2 1.400l2 1.600" stroke="#d8d8d8" stroke-width="1.200"/></svg>
<div class="t" style="left:587.2px;top:836.700px;font-family:'DejaVu Sans',sans-serif;font-size:9.700px;color:#3c3c3c;letter-spacing:-0.05px">CAD</div>
<div class="a" style="left:701px;top:834px;width:135px;height:17px;background:#dedede;border:1px solid #c4c4c4;border-bottom:0;border-radius:3px 3px 0 0"></div>
<svg style="left:704.6px;top:835.6px" width="12.6" height="12.6" viewBox="0 0 13 13"><path d="M1 .8l11 .6l-11 11z" fill="#ece8e8" stroke="#181818" stroke-width="1"/><path d="M3.600 1.600h7.800l-3 4.400h-6z" fill="#a01018"/><path d="M5 2v3h1.800M7.600 2.400h3M9 2.400l-.8 3" stroke="#f4e8e8" stroke-width=".8" fill="none"/></svg>
<div class="t" style="left:722.8px;top:836.700px;font-family:'DejaVu Sans',sans-serif;font-size:9.700px;color:#3c3c3c;letter-spacing:0.06px">LTspice XVII - bokare...</div>
<svg style="left:840px;top:836px" width="12.5" height="11.8" viewBox="0 0 20 18"><rect x=".6" y=".8" width="18.800" height="16" rx="2" fill="#555753" stroke="#2e3436" stroke-width="1"/><rect x="2.400" y="2.600" width="15.200" height="10.600" fill="#2e3436" stroke="#888a85" stroke-width=".7"/><path d="M4.600 5.400l3.400 2.400l-3.400 2.400M9 10.600h3.400" stroke="#eeeeec" stroke-width="1.300" fill="none"/><rect x="2.600" y="14.600" width="2.600" height="1" fill="#8ae234"/></svg>
<div class="t" style="left:858.3px;top:836.700px;font-family:'DejaVu Sans',sans-serif;font-size:9.700px;color:#3c3c3c;letter-spacing:-0.05px">Терминал</div>
<svg style="left:976px;top:836px" width="10" height="11.8" viewBox="0 0 18 21"><rect x=".6" y=".6" width="16.800" height="19.800" rx="1.500" fill="#6d6f6a" stroke="#3c3e3a" stroke-width="1"/><rect x="2.400" y="2.600" width="13.200" height="4.600" rx=".8" fill="#9be44c" stroke="#4e9a06" stroke-width=".6"/><path d="M2.600 10h13M2.600 12.800h13M2.600 15.600h13M2.600 18.200h13" stroke="#babdb6" stroke-width="1.500" stroke-dasharray="2.300 1.200"/></svg>
<div class="t" style="left:994px;top:836.700px;font-family:'DejaVu Sans',sans-serif;font-size:9.700px;color:#3c3c3c;letter-spacing:-0.05px">Калькулятор</div>
<svg style="left:1108.3px;top:836px" width="17.8" height="12" viewBox="0 0 18 12"><rect x=".6" y=".6" width="16.800" height="10.800" rx="1.600" fill="#6c9cd8" stroke="#3a6cb0" stroke-width="1"/><rect x="3.600" y=".8" width="10.800" height="5.600" fill="#fff"/><rect x="3.600" y=".8" width="10.800" height="1.300" fill="#f08c28"/><rect x="4.600" y="8" width="8.600" height="3.200" fill="#d0d0d0"/><rect x="7.600" y="8.600" width="1.800" height="2" fill="#444"/></svg>
<div class="a" style="left:1134px;top:833px;width:17.500px;height:18px;background:#000"></div>
<svg style="left:1134.6px;top:834.6px" width="16" height="16" viewBox="0 0 16 16"><rect x="0" y="0" width="16" height="16" rx="0" fill="#000"/><path d="M1.800 3.200L5.200 12.800L8.400 3.200" fill="none" stroke="#10c820" stroke-width="1.800"/><path d="M10 7.400V5.200Q10 3.600 11.700 3.600Q13.400 3.600 13.400 5.200V7.400" fill="none" stroke="#2030e0" stroke-width="1.500"/><path d="M14 9.400H11.800Q10.300 9.400 10.300 11Q10.300 12.700 11.800 12.700H14" fill="none" stroke="#f02020" stroke-width="1.500"/></svg>
<svg style="left:1155px;top:833.4px" width="13" height="17.4" viewBox="0 0 18 24"><ellipse cx="9" cy="12" rx="8.600" ry="11.600" fill="#3d78c0" stroke="#2a5a9c" stroke-width=".6"/><path d="M5 8l8 8l-4 3.600v-15.200l4 3.600l-8 8" fill="none" stroke="#fff" stroke-width="1.700" stroke-linejoin="round"/></svg>
<svg style="left:1174px;top:834px" width="13" height="16" viewBox="0 0 14 17"><defs><radialGradient id="dr" cx=".5" cy=".65" r=".5"><stop offset="0" stop-color="#bcd8f4"/><stop offset=".5" stop-color="#5c92d0"/><stop offset="1" stop-color="#2c5c9c"/></radialGradient></defs><path d="M7 .6q6.400 6.800 6.400 10.600q0 5.200-6.400 5.200t-6.400-5.200q0-3.800 6.400-10.600z" fill="url(#dr)"/></svg>
<svg style="left:1189.8px;top:833px" width="18.3" height="18" viewBox="0 0 24 24" preserveAspectRatio="none"><rect width="24" height="24" fill="#f4f0f0"/><rect x="0" y="0.00" width="24" height="1.85" fill="#d04848"/><rect x="0" y="3.69" width="24" height="1.85" fill="#d04848"/><rect x="0" y="7.38" width="24" height="1.85" fill="#d04848"/><rect x="0" y="11.08" width="24" height="1.85" fill="#d04848"/><rect x="0" y="14.77" width="24" height="1.85" fill="#d04848"/><rect x="0" y="18.46" width="24" height="1.85" fill="#d04848"/><rect x="0" y="22.15" width="24" height="1.85" fill="#d04848"/><rect x="0" y="0" width="13" height="12.900" fill="#3c4a86"/><path d="M1 2h11M1 4.400h11M1 6.800h11M1 9.200h11M1 11.400h11" stroke="#9aa4cc" stroke-width=".7" stroke-dasharray=".8 1.200"/></svg>
<svg style="left:1210px;top:835px" width="13" height="14" viewBox="0 0 16 18"><path d="M1 6.400h3l4.400-5q1.600-.6 1.600 1.600v12q0 2.200-1.600 1.600l-4.400-5h-3z" fill="#9a9c98" stroke="#555753" stroke-width=".9"/><path d="M6 5v8" stroke="#d8d8d4" stroke-width="1.400"/><path d="M12.600 6q2 3 0 6" fill="none" stroke="#4a82c8" stroke-width="1.300"/></svg>
<svg style="left:1231.6px;top:835.6px" width="6.8" height="13" viewBox="0 0 10 18"><path d="M1.400 1h7.200q1.400 6.600-3.600 8q-5-1.400-3.600-8z" fill="#f4ecec" stroke="#b0a0a0" stroke-width=".7"/><path d="M1.300 4.400h7.400q.4 4-3.700 4.800q-4.100-.8-3.700-4.800z" fill="#b01020"/><path d="M5 9v6.400M2.200 16.600q2.800-1.600 5.600 0" stroke="#bcb0b0" stroke-width="1.200" fill="none"/></svg>
<svg style="left:1243.6px;top:835.4px" width="18.6" height="14.6" viewBox="0 0 24 22"><path d="M3 3.400h12v15.200h-12z" fill="#6a7a48" stroke="#1c1c10" stroke-width="1.200"/><path d="M3 3.400l-2.400 2v11l2.400 2.200" fill="#30341c" stroke="#1c1c10" stroke-width="1"/><path d="M4.400 2.200v1.400M7 2.200v1.400M9.600 2.200v1.400M12.200 2.200v1.400M4.400 18.400v1.600M7 18.400v1.600M9.600 18.400v1.600M12.200 18.400v1.600M.6 6.600h2M.6 9.400h2M.6 12.200h2M.6 15h2" stroke="#e8d890" stroke-width="1.300"/><rect x="6" y="7.400" width="6.400" height="7" fill="#b8bca8" stroke="#3a3c2c" stroke-width=".6"/><rect x="14.600" y="1" width="8.400" height="20" rx="1.400" fill="#fff" stroke="#202020" stroke-width="1.400"/><rect x="15.400" y="10.400" width="6.800" height="9.800" fill="#8a7ad8"/><rect x="15.400" y="5.600" width="6.800" height="1" fill="#c8c8c8"/></svg>
<div class="t" style="left:1271.6px;top:836.700px;font-family:'DejaVu Sans',sans-serif;font-size:9.700px;color:#3c3c3c;letter-spacing:0px">1</div>
<div class="t" style="left:1286.2px;top:836.700px;font-family:'DejaVu Sans',sans-serif;font-size:9.700px;color:#3c3c3c;letter-spacing:-0.05px">GHz</div>
<svg style="left:1308px;top:835.8px" width="11.6" height="11.6" viewBox="0 0 20 20"><defs><radialGradient id="mor" cx=".5" cy=".5" r=".5"><stop offset="0" stop-color="#b8b8b4"/><stop offset=".75" stop-color="#c4c4c0"/><stop offset="1" stop-color="#d8d8d6"/></radialGradient></defs><circle cx="10" cy="10" r="9.600" fill="url(#mor)" stroke="#e0e0de" stroke-width=".8"/></svg>
<div class="t" style="left:1322px;top:836.700px;font-family:'DejaVu Sans',sans-serif;font-size:9.700px;color:#3c3c3c;letter-spacing:0px">1 °C</div>
<div class="t" style="left:1351.4px;top:836.700px;font-family:'DejaVu Sans',sans-serif;font-size:9.700px;color:#3c3c3c;letter-spacing:-0.1px">Вс, 28 мар, 04:44</div>
<div class="a" style="left:3px;top:851px;width:1433px;height:22px;background:#000"></div>
<!-- ltask.html -->
<div class="a" style="left:0;top:873px;width:1440px;height:27px;background:linear-gradient(180deg,#303030 0,#363636 2.300px,#dcdcdc 2.800px,#ececec 3.600px,#e8e8e8 100%)"></div>
<svg style="left:1px;top:876px" width="24" height="24" viewBox="0 0 24 24"><path d="M15.500 9.200C11 8 4 11 3.600 16C3.400 20 7 22 10.500 21.800C14 21.600 16.500 19.500 16 17.500C15.500 16 12.500 16 11.500 17.200C10.500 18.200 9 18 9 16.500C9 14.500 12 13.500 14 13C16.500 12.300 17.500 10 15.500 9.200Z" fill="#3a3a3a"/><ellipse cx="3.600" cy="8" rx="1.100" ry="1.700" fill="#3a3a3a" transform="rotate(-30 3.600 8)"/><ellipse cx="6.900" cy="5.800" rx="1.200" ry="1.900" fill="#3a3a3a" transform="rotate(-15 6.900 5.800)"/><ellipse cx="10.800" cy="4.600" rx="1.300" ry="2" fill="#3a3a3a" transform="rotate(5 10.800 4.600)"/><ellipse cx="16.600" cy="4" rx="3.600" ry="2" fill="#3a3a3a" transform="rotate(-25 16.600 4)"/><path d="M18.600 2.400q2.400-.6 3.400 2" stroke="#3a3a3a" stroke-width="1" fill="none"/></svg>
<div class="a" style="left:29px;top:875px;width:1.200px;height:25px;background:#4a4a4a"></div>
<div class="a" style="left:34px;top:876px;width:22px;height:24px;background:#f2f2f2;border-radius:3px"></div>
<svg style="left:35px;top:877.8px" width="20.6" height="18.4" viewBox="0 0 20 18"><defs><linearGradient id="fg35" x1="0" y1="0" x2="0" y2="1"><stop offset="0" stop-color="#9cc0ea"/><stop offset="1" stop-color="#5e92d2"/></linearGradient></defs><path d="M1 3.400q0-1.800 1.800-1.800h4.600q1.200 0 1.800 1.400h8q1.800 0 1.800 1.800v10.400q0 1.400-1.400 1.400h-15.200q-1.400 0-1.400-1.400z" fill="url(#fg35)" stroke="#3d6fae" stroke-width=".9"/><path d="M1.500 6h17" stroke="#c8dcf4" stroke-width=".9"/><path d="M6 9.600v4M14 9.600v4M8.400 9.400h3.200v4.400h-3.200z" stroke="#2f63ad" stroke-width="1" fill="none" stroke-dasharray="1.500 .8"/></svg>
<svg style="left:60px;top:879px" width="20.4" height="18.6" viewBox="0 0 20 18"><rect x=".6" y=".8" width="18.800" height="16" rx="2" fill="#555753" stroke="#2e3436" stroke-width="1"/><rect x="2.400" y="2.600" width="15.200" height="10.600" fill="#2e3436" stroke="#888a85" stroke-width=".7"/><path d="M4.600 5.400l3.400 2.400l-3.400 2.400M9 10.600h3.400" stroke="#eeeeec" stroke-width="1.300" fill="none"/><rect x="2.600" y="14.600" width="2.600" height="1" fill="#8ae234"/></svg>
<svg style="left:85px;top:877.8px" width="18.4" height="20.6" viewBox="0 0 18 20"><path d="M1 4q0-3 3-3h10q3 0 3 3v15h-16z" fill="#d9d9d6" stroke="#888a85" stroke-width="1"/><rect x="3" y="5" width="12" height="5.600" fill="#c4c4c0" stroke="#777" stroke-width=".9"/><rect x="3" y="12" width="12" height="5.600" fill="#c4c4c0" stroke="#777" stroke-width=".9"/><rect x="7" y="7" width="4" height="1.600" fill="#666"/><rect x="7" y="14" width="4" height="1.600" fill="#666"/></svg>
<svg style="left:108.8px;top:877px" width="18.6" height="21.6" viewBox="0 0 18 21"><rect x=".6" y=".6" width="16.800" height="19.800" rx="1.500" fill="#6d6f6a" stroke="#3c3e3a" stroke-width="1"/><rect x="2.400" y="2.600" width="13.200" height="4.600" rx=".8" fill="#9be44c" stroke="#4e9a06" stroke-width=".6"/><path d="M2.600 10h13M2.600 12.800h13M2.600 15.600h13M2.600 18.200h13" stroke="#babdb6" stroke-width="1.500" stroke-dasharray="2.300 1.200"/></svg>
<svg style="left:131.8px;top:877.8px" width="20.6" height="20.6" viewBox="0 0 20 20"><rect x="1" y="1" width="18" height="18" fill="#fff" stroke="#0a6a0a" stroke-width="2"/><path d="M3.600 4.400h5l2.600 3.400l3-3.400h3l-4.600 5.400l4.600 5.800h-5l-2.400-3.400l-3 3.400h-3.400l4.800-5.600z" fill="#0a7a0a"/></svg>
<svg style="left:155.8px;top:877.8px" width="20.6" height="20.6" viewBox="0 0 20 20"><rect x="1" y="1" width="18" height="18" fill="#fff" stroke="#0a0a9a" stroke-width="2"/><path d="M3.400 5h3.200l.6 6l2.400-6h2.600l.4 6l2.400-6h3l-4.400 10h-3l-.4-5.600l-2.400 5.600h-3z" fill="#0a0a9a"/></svg>
<svg style="left:178px;top:875.8px" width="24.4" height="24.4" viewBox="0 0 20 20"><defs><radialGradient id="mbl1" cx=".4" cy=".35" r=".75"><stop offset="0" stop-color="#f4f8fc"/><stop offset=".65" stop-color="#c4d2e8"/><stop offset="1" stop-color="#a8a8cc"/></radialGradient></defs><circle cx="10" cy="10" r="9.600" fill="url(#mbl1)"/></svg>
<svg style="left:216.6px;top:880px" width="16.4" height="16.4" viewBox="0 0 20 20"><defs><radialGradient id="mbl2" cx=".4" cy=".35" r=".75"><stop offset="0" stop-color="#f4f8fc"/><stop offset=".65" stop-color="#c4d2e8"/><stop offset="1" stop-color="#a8a8cc"/></radialGradient></defs><circle cx="10" cy="10" r="9.600" fill="url(#mbl2)"/></svg>
<div class="t" style="left:241.2px;top:881.500px;font-family:'DejaVu Sans',sans-serif;font-size:13.300px;color:#3a3a3a;letter-spacing:-0.05px">АВТОКЛУБ ВАЗ-2106. Тюн...</div>
<div class="a" style="left:436.500px;top:876px;width:223px;height:25px;background:#dcdcdc;border:1px solid #bdbdbd;border-radius:3.500px 3.500px 0 0"></div>
<svg style="left:441px;top:880px" width="16" height="16" viewBox="0 0 16 16"><rect x="0" y="0" width="16" height="16" rx="2.5" fill="#fff"/><path d="M1.800 3.200L5.200 12.800L8.400 3.200" fill="none" stroke="#f02020" stroke-width="1.800"/><path d="M10 7.400V5.200Q10 3.600 11.700 3.600Q13.400 3.600 13.400 5.200V7.400" fill="none" stroke="#10a020" stroke-width="1.500"/><path d="M14 9.400H11.800Q10.300 9.400 10.300 11Q10.300 12.700 11.800 12.700H14" fill="none" stroke="#2050f0" stroke-width="1.500"/></svg>
<div class="t" style="left:465.6px;top:881.500px;font-family:'DejaVu Sans',sans-serif;font-size:13.300px;color:#3a3a3a;letter-spacing:-0.1px">yes - VNC Viewer</div>
<svg style="left:665px;top:880px" width="16.4" height="15.4" viewBox="0 0 16 15"><defs><linearGradient id="pfb" x1="0" y1="0" x2="0" y2="1"><stop offset="0" stop-color="#a4c4ec"/><stop offset="1" stop-color="#5a8cd0"/></linearGradient></defs><path d="M.6 2.400q0-1.600 1.600-1.600h3.600q1 0 1.600 1.200h6.400q1.600 0 1.600 1.600v9.400q0 1.400-1.400 1.400h-12q-1.400 0-1.400-1.400z" fill="url(#pfb)" stroke="#3a6cae" stroke-width=".9"/><path d="M1 4.600h7" stroke="#d4e4f8" stroke-width=".8"/></svg>
<div class="t" style="left:689px;top:881.500px;font-family:'DejaVu Sans',sans-serif;font-size:13.300px;color:#3a3a3a;letter-spacing:-0.17px">tor-browser_ru</div>
<svg style="left:999.6px;top:876.6px" width="25" height="22" viewBox="0 0 25 22"><rect x="0" y="0" width="25" height="22" rx="3" fill="#f2f2f2"/><path d="M1.400 6q0-2 2-2h5.600q1.400 0 2 1.400h10.600q2 0 2 2v10q0 1.600-1.600 1.600h-19q-1.600 0-1.600-1.600z" fill="#8cb4e4" stroke="#3a6cae" stroke-width="1"/><path d="M2 8.600h21" stroke="#c4d8f0" stroke-width="1"/><path d="M25 14v8h-8z" fill="#20d020"/><rect x="8" y="16" width="9" height="2.600" rx="1" fill="#555" stroke="#ccc" stroke-width=".5"/></svg>
<svg style="left:1036.6px;top:875.8px" width="18.4" height="24.4" viewBox="0 0 18 24"><ellipse cx="9" cy="12" rx="8.600" ry="11.600" fill="#3d78c0" stroke="#2a5a9c" stroke-width=".6"/><path d="M5 8l8 8l-4 3.600v-15.200l4 3.600l-8 8" fill="none" stroke="#fff" stroke-width="1.700" stroke-linejoin="round"/></svg>
<svg style="left:1059px;top:875.8px" width="24.2" height="24.2" viewBox="0 0 24 24" preserveAspectRatio="none"><rect width="24" height="24" fill="#f4f0f0"/><rect x="0" y="0.00" width="24" height="1.85" fill="#d04848"/><rect x="0" y="3.69" width="24" height="1.85" fill="#d04848"/><rect x="0" y="7.38" width="24" height="1.85" fill="#d04848"/><rect x="0" y="11.08" width="24" height="1.85" fill="#d04848"/><rect x="0" y="14.77" width="24" height="1.85" fill="#d04848"/><rect x="0" y="18.46" width="24" height="1.85" fill="#d04848"/><rect x="0" y="22.15" width="24" height="1.85" fill="#d04848"/><rect x="0" y="0" width="13" height="12.900" fill="#3c4a86"/><path d="M1 2h11M1 4.400h11M1 6.800h11M1 9.200h11M1 11.400h11" stroke="#9aa4cc" stroke-width=".7" stroke-dasharray=".8 1.200"/></svg>
<svg style="left:1086px;top:879px" width="16" height="18" viewBox="0 0 16 18"><path d="M1 6.400h3l4.400-5q1.600-.6 1.600 1.600v12q0 2.200-1.600 1.600l-4.400-5h-3z" fill="#9a9c98" stroke="#555753" stroke-width=".9"/><path d="M6 5v8" stroke="#d8d8d4" stroke-width="1.400"/><path d="M12.600 6q2 3 0 6" fill="none" stroke="#4a82c8" stroke-width="1.300"/></svg>
<svg style="left:1112px;top:880px" width="19.6" height="17.6" viewBox="0 0 20 18"><rect x=".6" y="11.600" width="4" height="6" fill="#3c6cb4" stroke="#24467c" stroke-width=".8"/><rect x="5.400" y="8" width="4" height="9.600" fill="#3c6cb4" stroke="#24467c" stroke-width=".8"/><rect x="10.200" y="4.400" width="4" height="13.200" fill="#3c6cb4" stroke="#24467c" stroke-width=".8"/><rect x="15" y=".8" width="4" height="16.800" fill="#c4c4c4" stroke="#707070" stroke-width=".8"/></svg>
<svg style="left:1135.6px;top:876.8px" width="21.6" height="21.6" viewBox="0 0 22 22"><rect x="4.600" y=".6" width="5" height="2" fill="#c8c8c8" stroke="#808080" stroke-width=".6"/><rect x="1" y="2.400" width="12.400" height="17" rx="1" fill="#f0f0f0" stroke="#8a8a8a" stroke-width="1"/><rect x="2.400" y="13.600" width="9.600" height="4.400" fill="#3c6cb4"/><path d="M8 6l-3.400 5h3l-1.600 4.600l5-6h-3l2-3.600z" fill="#f4b820" stroke="#c08810" stroke-width=".5"/><path d="M12 12.600v-3h2v3h3v-3h2v3q2 .4 2 2.400v6h-11v-6q0-2 2-2.400z" fill="#e8e8e6" stroke="#8a8a8a" stroke-width=".9"/></svg>
<svg style="left:1165.4px;top:879px" width="9" height="18.6" viewBox="0 0 10 18"><path d="M1.400 1h7.200q1.400 6.600-3.600 8q-5-1.400-3.600-8z" fill="#f4ecec" stroke="#b0a0a0" stroke-width=".7"/><path d="M1.300 4.400h7.400q.4 4-3.700 4.800q-4.100-.8-3.700-4.800z" fill="#b01020"/><path d="M5 9v6.400M2.200 16.600q2.800-1.600 5.600 0" stroke="#bcb0b0" stroke-width="1.200" fill="none"/></svg>
<svg style="left:1181.4px;top:878.4px" width="24" height="20.4" viewBox="0 0 24 22"><path d="M3 3.400h12v15.200h-12z" fill="#6a7a48" stroke="#1c1c10" stroke-width="1.200"/><path d="M3 3.400l-2.400 2v11l2.400 2.200" fill="#30341c" stroke="#1c1c10" stroke-width="1"/><path d="M4.400 2.200v1.400M7 2.200v1.400M9.600 2.200v1.400M12.200 2.200v1.400M4.400 18.400v1.600M7 18.400v1.600M9.600 18.400v1.600M12.200 18.400v1.600M.6 6.600h2M.6 9.400h2M.6 12.200h2M.6 15h2" stroke="#e8d890" stroke-width="1.300"/><rect x="6" y="7.400" width="6.400" height="7" fill="#b8bca8" stroke="#3a3c2c" stroke-width=".6"/><rect x="14.600" y="1" width="8.400" height="20" rx="1.400" fill="#fff" stroke="#202020" stroke-width="1.400"/><rect x="15.400" y="10.400" width="6.800" height="9.800" fill="#8a7ad8"/><rect x="15.400" y="5.600" width="6.800" height="1" fill="#c8c8c8"/></svg>
<div class="t" style="left:1210.2px;top:881.500px;font-family:'DejaVu Sans',sans-serif;font-size:13.300px;color:#3a3a3a;letter-spacing:-0.05px">881 MHz</div>
<svg style="left:1267.3px;top:880px" width="15.6" height="15.6" viewBox="0 0 20 20"><defs><radialGradient id="mol" cx=".5" cy=".5" r=".5"><stop offset="0" stop-color="#b8b8b4"/><stop offset=".75" stop-color="#c4c4c0"/><stop offset="1" stop-color="#d8d8d6"/></radialGradient></defs><circle cx="10" cy="10" r="9.600" fill="url(#mol)" stroke="#e0e0de" stroke-width=".8"/></svg>
<div class="t" style="left:1285.8px;top:881.500px;font-family:'DejaVu Sans',sans-serif;font-size:13.300px;color:#3a3a3a;letter-spacing:0px">1 °C</div>
<div class="t" style="left:1324.6px;top:881.500px;font-family:'DejaVu Sans',sans-serif;font-size:13.300px;color:#3a3a3a;letter-spacing:-0.1px">Вс, 28 мар, 04:44</div>

</body></html>
